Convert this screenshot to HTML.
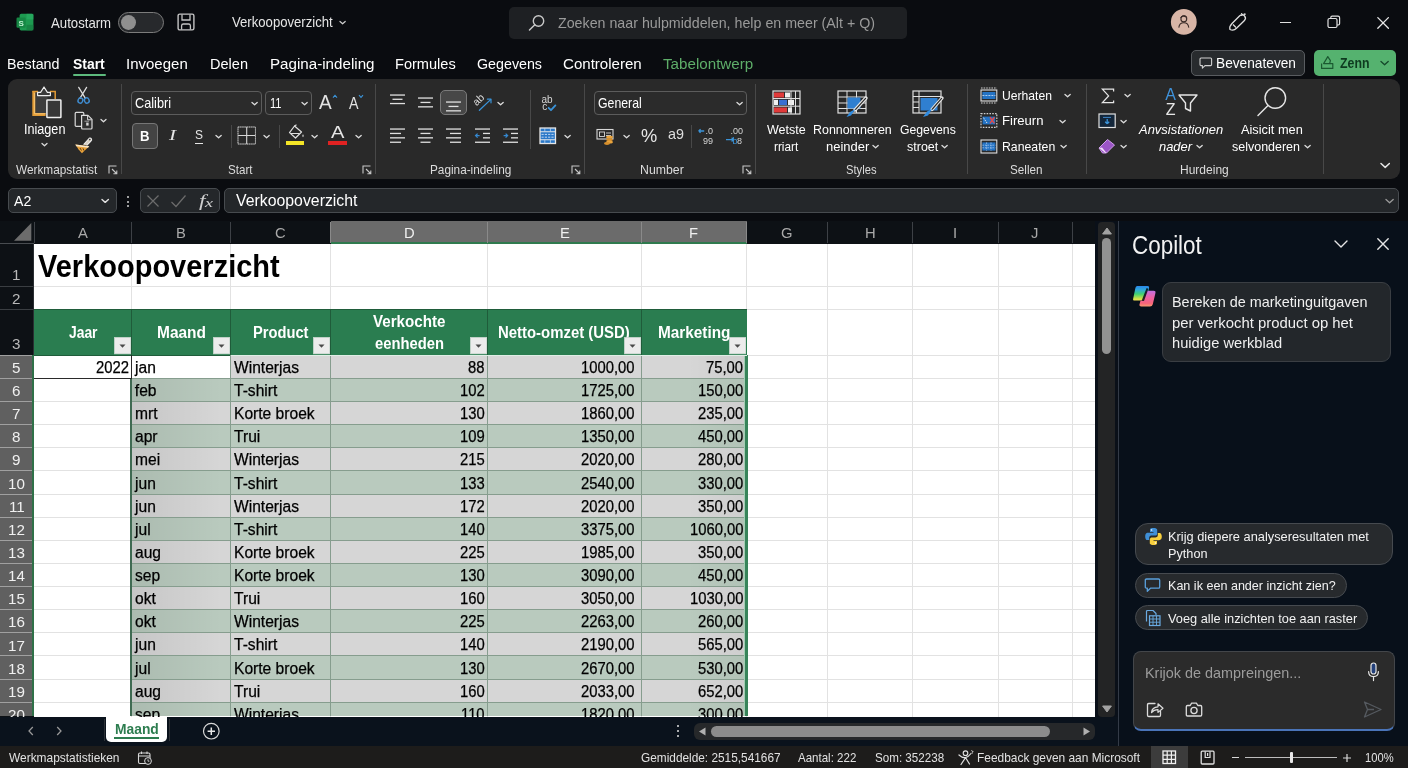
<!DOCTYPE html>
<html lang="nl"><head><meta charset="utf-8"><title>Verkoopoverzicht - Excel</title>
<style>
*{box-sizing:border-box;margin:0;padding:0}
html,body{width:1408px;height:768px;overflow:hidden;background:#0a0c10;font-family:"Liberation Sans",sans-serif;}
body{position:relative;filter:opacity(1)}
.a{position:absolute;display:block}
.t{position:absolute;display:block;white-space:nowrap;transform-origin:0 50%;}

</style></head>
<body>
<svg class="a" style="left:16px;top:13px;" width="18" height="19" viewBox="0 0 18 19" fill="none"><rect x="3.6" y="0.8" width="13.8" height="16.6" rx="1.6" fill="#1d9a50"/>
<rect x="10.5" y="0.8" width="6.9" height="5.6" fill="#2bb365" opacity=".6"/><rect x="10.5" y="11.8" width="6.9" height="5.6" fill="#157a3e" opacity=".7"/>
<rect x="0.5" y="4.6" width="9.2" height="10.2" rx="1.2" fill="#168744"/>
<text x="2.6" y="12.6" font-family="Liberation Sans" font-size="8" font-weight="700" fill="#bdf0d0">S</text></svg>
<span class="t" style="left:50.60px;top:16px;font-size:14.2px;line-height:14.2px;color:#e6e6e6;transform:scaleX(0.9295);">Autostarm</span>
<div class="a" style="left:117.8px;top:11.7px;width:46px;height:21.4px;background:#27292c;border:1.6px solid #7c7c7c;border-radius:10.7px;"></div>
<div class="a" style="left:120.8px;top:15px;width:14.8px;height:14.8px;background:#8f8f8f;border-radius:7.4px;"></div>
<svg class="a" style="left:176.5px;top:13.4px;" width="18" height="18" viewBox="0 0 18 18" fill="none"><rect x="1.1" y="1.1" width="15.8" height="15.8" rx="1.6" stroke="#c4c4c4" stroke-width="1.4"/>
<path d="M5 1.4 V7 H13 V1.4" stroke="#c4c4c4" stroke-width="1.3"/>
<path d="M4.6 16.6 V12.8 Q4.6 11 6.4 11 H11.6 Q13.4 11 13.4 12.8 V16.6" stroke="#c4c4c4" stroke-width="1.3"/></svg>
<span class="t" style="left:231.75px;top:16px;font-size:13.8px;line-height:13.8px;color:#e6e6e6;transform:scaleX(0.9519);">Verkoopoverzicht</span>
<svg class="a" style="left:338.9px;top:20.4px;" width="7.2" height="5.6" viewBox="0 0 7.2 5.6" fill="none"><path d="M1 1.5 L3.6 3.8 L6.2 1.5" stroke="#cfcfcf" stroke-width="1.2" stroke-linecap="round" stroke-linejoin="round"/></svg>
<div class="a" style="left:508.5px;top:7px;width:398.5px;height:31.5px;background:#1e2023;border-radius:5px;"></div>
<svg class="a" style="left:526px;top:12px;" width="22" height="22" viewBox="0 0 22 22" fill="none"><circle cx="12.5" cy="9" r="5.2" stroke="#c9c9c9" stroke-width="1.4"/><path d="M8.8 12.8 L3.5 18" stroke="#c9c9c9" stroke-width="1.5" stroke-linecap="round"/></svg>
<span class="t" style="left:557.50px;top:16px;font-size:14.6px;line-height:14.6px;color:#9a9a9a;transform:scaleX(0.9757);">Zoeken naar hulpmiddelen, help en meer (Alt + Q)</span>
<svg class="a" style="left:1170px;top:8px;" width="28" height="28" viewBox="0 0 28 28" fill="none"><circle cx="13.8" cy="13.9" r="12.9" fill="#d8b5a6"/>
<circle cx="13.8" cy="11" r="2.9" stroke="#3a2b28" stroke-width="1.1"/>
<path d="M10.4 9.6 Q13.8 5.4 17.2 9.6" stroke="#3a2b28" stroke-width="1"/>
<path d="M8.8 19.6 C9.2 16 11.2 14.8 13.8 14.8 C16.4 14.8 18.4 16 18.8 19.6" stroke="#3a2b28" stroke-width="1.1"/></svg>
<svg class="a" style="left:1226px;top:11px;" width="23" height="23" viewBox="0 0 23 23" fill="none"><path d="M4 18.5 C3.2 16 4.5 14 6 12.5 L13.5 5 C15 3.5 17.5 3.6 18.6 5 C19.8 6.4 19.5 8.4 18.2 9.7 L10.5 17.3 C9 18.8 6.5 19.6 4 18.5 Z" stroke="#e0e0e0" stroke-width="1.3" stroke-linejoin="round"/>
<path d="M7 13.5 L10 16.5 M15 4.5 L17.5 3" stroke="#e0e0e0" stroke-width="1.2"/>
<circle cx="18.8" cy="3.2" r="0.9" fill="#e0e0e0"/><circle cx="15.6" cy="2.6" r="0.7" fill="#e0e0e0"/></svg>
<div class="a" style="left:1279.5px;top:21.8px;width:11px;height:1.3px;background:#e0e0e0;"></div>
<svg class="a" style="left:1326px;top:14px;" width="16" height="16" viewBox="0 0 16 16" fill="none"><rect x="2" y="4.5" width="9" height="9" rx="1.5" stroke="#e0e0e0" stroke-width="1.2"/><path d="M4.8 4.5 V3.5 Q4.8 2.2 6.2 2.2 H12 Q13.6 2.2 13.6 3.8 V9.6 Q13.6 11 12.3 11 H11" stroke="#e0e0e0" stroke-width="1.2"/></svg>
<svg class="a" style="left:1376px;top:16px;" width="14" height="14" viewBox="0 0 14 14" fill="none"><path d="M1.8 1.6 L12.4 12.2 M12.4 1.6 L1.8 12.2" stroke="#e6e6e6" stroke-width="1.3" stroke-linecap="round"/></svg>
<span class="t" style="left:7.00px;top:56px;font-size:15.4px;line-height:15.4px;color:#ffffff;transform:scaleX(0.9295);">Bestand</span>
<span class="t" style="left:73.25px;top:56px;font-size:15.4px;line-height:15.4px;color:#ffffff;font-weight:700;transform:scaleX(0.9051);">Start</span>
<span class="t" style="left:126.25px;top:56px;font-size:15.4px;line-height:15.4px;color:#ffffff;transform:scaleX(0.9748);">Invoegen</span>
<span class="t" style="left:209.50px;top:56px;font-size:15.4px;line-height:15.4px;color:#ffffff;transform:scaleX(0.9448);">Delen</span>
<span class="t" style="left:269.50px;top:56px;font-size:15.4px;line-height:15.4px;color:#ffffff;transform:scaleX(0.9848);">Pagina-indeling</span>
<span class="t" style="left:395.00px;top:56px;font-size:15.4px;line-height:15.4px;color:#ffffff;transform:scaleX(0.9471);">Formules</span>
<span class="t" style="left:477.00px;top:56px;font-size:15.4px;line-height:15.4px;color:#ffffff;transform:scaleX(0.9263);">Gegevens</span>
<span class="t" style="left:563.25px;top:56px;font-size:15.4px;line-height:15.4px;color:#ffffff;transform:scaleX(0.9792);">Controleren</span>
<span class="t" style="left:663.25px;top:56px;font-size:15.4px;line-height:15.4px;color:#5eae69;transform:scaleX(0.9858);">Tabelontwerp</span>
<div class="a" style="left:73px;top:73.6px;width:33.3px;height:2px;background:#5dba7d;border-radius:1px;"></div>
<div class="a" style="left:1190.5px;top:50px;width:114px;height:25.5px;background:#282b2e;border:1px solid #595c60;border-radius:5px;"></div>
<svg class="a" style="left:1197.5px;top:54.5px;" width="16" height="16" viewBox="0 0 16 16" fill="none"><path d="M3 3 H12.6 Q13.6 3 13.6 4 V9.6 Q13.6 10.6 12.6 10.6 H7 L4.4 13.2 V10.6 H3 Q2 10.6 2 9.6 V4 Q2 3 3 3 Z" stroke="#d0d0d0" stroke-width="1.1" stroke-linejoin="round"/></svg>
<span class="t" style="left:1216.00px;top:56px;font-size:14.6px;line-height:14.6px;color:#ffffff;transform:scaleX(0.9389);">Bevenateven</span>
<div class="a" style="left:1313.5px;top:50px;width:82px;height:25.5px;background:#55b26f;border-radius:5px;"></div>
<svg class="a" style="left:1319px;top:54px;" width="17" height="17" viewBox="0 0 17 17" fill="none"><path d="M2.6 9.6 V14.4 H13.8 V9.6 H10.6 M8.8 2.6 L4.6 9.6 H10.6 L11.4 6.6 Z" stroke="#1b5a31" stroke-width="1.2" stroke-linejoin="round"/></svg>
<span class="t" style="left:1339.50px;top:56px;font-size:14.6px;line-height:14.6px;color:#0e3a1f;font-weight:700;transform:scaleX(0.8459);">Zenn</span>
<svg class="a" style="left:1380.15px;top:60.2px;" width="9.2" height="6.6" viewBox="0 0 9.2 6.6" fill="none"><path d="M1 1.5 L4.6 4.8 L8.2 1.5" stroke="#14482a" stroke-width="1.3" stroke-linecap="round" stroke-linejoin="round"/></svg>
<div class="a" style="left:8px;top:79px;width:1392px;height:100.3px;background:#292929;border-radius:9px;"></div>
<div class="a" style="left:121.25px;top:83.5px;width:1.2px;height:90px;background:#484848;"></div>
<div class="a" style="left:375.25px;top:83.5px;width:1.2px;height:90px;background:#484848;"></div>
<div class="a" style="left:584.0px;top:83.5px;width:1.2px;height:90px;background:#484848;"></div>
<div class="a" style="left:755.25px;top:83.5px;width:1.2px;height:90px;background:#484848;"></div>
<div class="a" style="left:966.75px;top:83.5px;width:1.2px;height:90px;background:#484848;"></div>
<div class="a" style="left:1085.5px;top:83.5px;width:1.2px;height:90px;background:#484848;"></div>
<div class="a" style="left:1323.0px;top:83.5px;width:1.2px;height:90px;background:#484848;"></div>
<div class="a" style="left:230.75px;top:124.5px;width:1.2px;height:23.0px;background:#484848;"></div>
<div class="a" style="left:278.75px;top:124.5px;width:1.2px;height:23.0px;background:#484848;"></div>
<div class="a" style="left:529.5px;top:89.5px;width:1.2px;height:59.0px;background:#484848;"></div>
<div class="a" style="left:691.0px;top:124.5px;width:1.2px;height:23.0px;background:#484848;"></div>
<span class="t" style="left:16.25px;top:164px;font-size:12.4px;line-height:12.4px;color:#dcdcdc;transform:scaleX(0.9541);">Werkmapstatist</span>
<span class="t" style="left:227.50px;top:164px;font-size:12.4px;line-height:12.4px;color:#dcdcdc;transform:scaleX(0.9361);">Start</span>
<span class="t" style="left:429.50px;top:164px;font-size:12.4px;line-height:12.4px;color:#dcdcdc;transform:scaleX(0.9512);">Pagina-indeling</span>
<span class="t" style="left:639.50px;top:164px;font-size:12.4px;line-height:12.4px;color:#dcdcdc;transform:scaleX(0.9926);">Number</span>
<span class="t" style="left:846.00px;top:164px;font-size:12.4px;line-height:12.4px;color:#dcdcdc;transform:scaleX(0.9037);">Styles</span>
<span class="t" style="left:1010.25px;top:164px;font-size:12.4px;line-height:12.4px;color:#dcdcdc;transform:scaleX(0.9433);">Sellen</span>
<span class="t" style="left:1179.75px;top:164px;font-size:12.4px;line-height:12.4px;color:#dcdcdc;transform:scaleX(0.9692);">Hurdeing</span>
<svg class="a" style="left:108.25px;top:164.5px;" width="10" height="10" viewBox="0 0 10 10" fill="none"><path d="M1 8.5 V1 H8.5" stroke="#c8c8c8" stroke-width="1.1"/><path d="M4 4 L8.5 8.5 M8.8 5.4 V8.8 H5.4" stroke="#c8c8c8" stroke-width="1.1"/></svg>
<svg class="a" style="left:362px;top:164.5px;" width="10" height="10" viewBox="0 0 10 10" fill="none"><path d="M1 8.5 V1 H8.5" stroke="#c8c8c8" stroke-width="1.1"/><path d="M4 4 L8.5 8.5 M8.8 5.4 V8.8 H5.4" stroke="#c8c8c8" stroke-width="1.1"/></svg>
<svg class="a" style="left:571.25px;top:164.5px;" width="10" height="10" viewBox="0 0 10 10" fill="none"><path d="M1 8.5 V1 H8.5" stroke="#c8c8c8" stroke-width="1.1"/><path d="M4 4 L8.5 8.5 M8.8 5.4 V8.8 H5.4" stroke="#c8c8c8" stroke-width="1.1"/></svg>
<svg class="a" style="left:742px;top:164.5px;" width="10" height="10" viewBox="0 0 10 10" fill="none"><path d="M1 8.5 V1 H8.5" stroke="#c8c8c8" stroke-width="1.1"/><path d="M4 4 L8.5 8.5 M8.8 5.4 V8.8 H5.4" stroke="#c8c8c8" stroke-width="1.1"/></svg>
<svg class="a" style="left:1379.55px;top:162.4px;" width="10.4" height="7.2" viewBox="0 0 10.4 7.2" fill="none"><path d="M1 1.5 L5.2 5.4 L9.4 1.5" stroke="#e6e6e6" stroke-width="1.5" stroke-linecap="round" stroke-linejoin="round"/></svg>
<svg class="a" style="left:30px;top:85px;" width="33" height="34" viewBox="0 0 33 34" fill="none"><rect x="4.6" y="7" width="13" height="21.5" fill="#3d3d3d"/>
<path d="M2.4 6.6 H8 M20 6.6 H25.2 V14" stroke="#e29b36" stroke-width="1.5"/>
<path d="M3.8 6 V29.6 H15.6" stroke="#e29b36" stroke-width="3"/>
<path d="M4.4 8 V28.8 H15.6" stroke="#f7c777" stroke-width=".9"/>
<path d="M7.6 10.6 V7.4 H10.6 L14 2 L17.4 7.4 H20.4 V10.6 Z" stroke="#ededed" stroke-width="1.2" fill="#3a3a3a" stroke-linejoin="round"/>
<rect x="16.9" y="14.9" width="14" height="17.6" rx=".6" fill="#383838" stroke="#f0f0f0" stroke-width="1.5"/></svg>
<span class="t" style="left:24.40px;top:123px;font-size:13.8px;line-height:13.8px;color:#ffffff;transform:scaleX(0.9146);">Iniagen</span>
<svg class="a" style="left:41.0px;top:142.25px;" width="7.0" height="5.5" viewBox="0 0 7.0 5.5" fill="none"><path d="M1 1.5 L3.5 3.7 L6.0 1.5" stroke="#dcdcdc" stroke-width="1.3" stroke-linecap="round" stroke-linejoin="round"/></svg>
<svg class="a" style="left:74px;top:85px;" width="20" height="21" viewBox="0 0 20 21" fill="none"><path d="M4.7 2.4 L11.4 13.4 M12.6 2.4 L5.9 13.4" stroke="#dedede" stroke-width="1.25" stroke-linecap="round"/>
<ellipse cx="6.4" cy="15.5" rx="2.3" ry="2.7" transform="rotate(25 6.4 15.5)" stroke="#3f8dd2" stroke-width="1.4"/><ellipse cx="12.8" cy="15.5" rx="2.3" ry="2.7" transform="rotate(-25 12.8 15.5)" stroke="#3f8dd2" stroke-width="1.4"/></svg>
<svg class="a" style="left:74px;top:111px;" width="20" height="20" viewBox="0 0 20 20" fill="none"><rect x="1.2" y="1.4" width="8.6" height="14" rx="1" stroke="#d8d8d8" stroke-width="1.2"/>
<path d="M7.6 4.4 H14 L18 8.4 V17 Q18 18 17 18 H8.6 Q7.6 18 7.6 17 Z" fill="#303030" stroke="#dcdcdc" stroke-width="1.2" stroke-linejoin="round"/>
<path d="M13.6 4.8 V8.8 H17.6" stroke="#dcdcdc" stroke-width="1"/><rect x="12.2" y="11.6" width="2.4" height="3" fill="#d8d8d8"/><path d="M10.5 10.2 H15" stroke="#bdbdbd" stroke-width=".8"/></svg>
<svg class="a" style="left:100.3px;top:118.25px;" width="7.0" height="5.5" viewBox="0 0 7.0 5.5" fill="none"><path d="M1 1.5 L3.5 3.7 L6.0 1.5" stroke="#dcdcdc" stroke-width="1.3" stroke-linecap="round" stroke-linejoin="round"/></svg>
<svg class="a" style="left:74px;top:136px;" width="20" height="19" viewBox="0 0 20 19" fill="none"><path d="M1.4 8.4 L15.2 10.2 L11.6 13.8 L7.9 17.2 L4.6 13.6 Z" fill="#e8a13a"/>
<path d="M1.4 8.4 L15.2 10.2 L14 11.8 L2.2 10.2 Z" fill="#f8e6c8"/>
<path d="M6 12 L7.5 14.5 M9 12.4 L10 14.6" stroke="#3a2a10" stroke-width=".8"/>
<path d="M9.6 8.6 L14.6 3 Q16 1.4 17.2 2.5 Q18.3 3.7 16.9 5.1 L12.8 9.4" stroke="#ececec" stroke-width="1.1" fill="#d8cfc0"/>
<circle cx="15.8" cy="3.6" r=".8" fill="#2b2b2b"/></svg>
<div class="a" style="left:131.25px;top:91px;width:130.5px;height:24px;background:#2b2b2b;border:1px solid #5c5c5c;border-radius:4px;"></div>
<span class="t" style="left:134.70px;top:96px;font-size:14.4px;line-height:14.4px;color:#ffffff;transform:scaleX(0.8836);">Calibri</span>
<svg class="a" style="left:251.4px;top:100.5px;" width="7.2" height="5.6" viewBox="0 0 7.2 5.6" fill="none"><path d="M1 1.5 L3.6 3.8 L6.2 1.5" stroke="#dcdcdc" stroke-width="1.3" stroke-linecap="round" stroke-linejoin="round"/></svg>
<div class="a" style="left:265px;top:91px;width:47px;height:24px;background:#2b2b2b;border:1px solid #5c5c5c;border-radius:4px;"></div>
<span class="t" style="left:269.70px;top:96px;font-size:14.4px;line-height:14.4px;color:#ffffff;transform:scaleX(0.7724);">11</span>
<svg class="a" style="left:301.4px;top:100.5px;" width="7.2" height="5.6" viewBox="0 0 7.2 5.6" fill="none"><path d="M1 1.5 L3.6 3.8 L6.2 1.5" stroke="#dcdcdc" stroke-width="1.3" stroke-linecap="round" stroke-linejoin="round"/></svg>
<span class="t" style="left:319.30px;top:92px;font-size:20px;line-height:20px;color:#e2e2e2;transform:scaleX(0.9518);">A</span>
<svg class="a" style="left:331.6px;top:93.6px;" width="6" height="5" viewBox="0 0 6 5" fill="none"><path d="M1 3.6 L3 1.4 L5 3.6" stroke="#3a93d8" stroke-width="1.1"/></svg>
<span class="t" style="left:349.10px;top:96px;font-size:15.6px;line-height:15.6px;color:#e2e2e2;transform:scaleX(0.9129);">A</span>
<svg class="a" style="left:357.6px;top:94px;" width="6" height="5" viewBox="0 0 6 5" fill="none"><path d="M1 1.2 L3 3.4 L5 1.2" stroke="#3a93d8" stroke-width="1.1"/></svg>
<div class="a" style="left:132px;top:123px;width:26.3px;height:26.3px;background:#444444;border:1px solid #767676;border-radius:4px;"></div>
<span class="t" style="left:140.30px;top:129px;font-size:14.5px;line-height:14.5px;color:#ffffff;font-weight:700;transform:scaleX(0.9061);">B</span>
<span class="t" style="left:168.50px;top:128px;font-size:15px;line-height:15px;color:#e6e6e6;font-style:italic;transform:scaleX(1.4000);font-family:'Liberation Serif',serif;">I</span>
<span class="t" style="left:194.50px;top:128px;font-size:13.5px;line-height:13.5px;color:#e6e6e6;transform:scaleX(0.8873);">S</span>
<div class="a" style="left:194.5px;top:142.6px;width:8.3px;height:1.2px;background:#e6e6e6;"></div>
<svg class="a" style="left:214.65px;top:134.2px;" width="7.2" height="5.6" viewBox="0 0 7.2 5.6" fill="none"><path d="M1 1.5 L3.6 3.8 L6.2 1.5" stroke="#dcdcdc" stroke-width="1.3" stroke-linecap="round" stroke-linejoin="round"/></svg>
<svg class="a" style="left:237px;top:126px;" width="20" height="19" viewBox="0 0 20 19" fill="none"><rect x="1" y="1" width="17.4" height="17" stroke="#a8a8a8" stroke-width="1" stroke-dasharray="1.1 1.1"/>
<path d="M9.7 1 V18 M1 9.5 H18.4" stroke="#d6d6d6" stroke-width="1.1"/><rect x="1" y="1" width="17.4" height="17" stroke="#bdbdbd" stroke-width="0.6"/></svg>
<svg class="a" style="left:263.4px;top:134.2px;" width="7.2" height="5.6" viewBox="0 0 7.2 5.6" fill="none"><path d="M1 1.5 L3.6 3.8 L6.2 1.5" stroke="#dcdcdc" stroke-width="1.3" stroke-linecap="round" stroke-linejoin="round"/></svg>
<svg class="a" style="left:286px;top:124px;" width="20" height="17" viewBox="0 0 20 17" fill="none"><path d="M8.5 2 L15.5 8 L9.5 14 L3.5 8.6 Z" stroke="#e0e0e0" stroke-width="1.2" stroke-linejoin="round"/>
<path d="M8.5 2 L10.5 0.8 M5 9.5 H13.5" stroke="#e0e0e0" stroke-width="1.1"/>
<path d="M17 10 Q18.5 12.3 17 13.2 Q15.5 12.3 17 10 Z" fill="#e0e0e0"/></svg>
<div class="a" style="left:285.75px;top:140.6px;width:18px;height:4.2px;background:#f4e527;"></div>
<svg class="a" style="left:311.4px;top:134.2px;" width="7.2" height="5.6" viewBox="0 0 7.2 5.6" fill="none"><path d="M1 1.5 L3.6 3.8 L6.2 1.5" stroke="#dcdcdc" stroke-width="1.3" stroke-linecap="round" stroke-linejoin="round"/></svg>
<span class="t" style="left:331.20px;top:124px;font-size:17px;line-height:17px;color:#e6e6e6;transform:scaleX(1.1813);">A</span>
<div class="a" style="left:328.3px;top:140.6px;width:19.2px;height:4.4px;background:#e02222;"></div>
<svg class="a" style="left:354.65px;top:134.2px;" width="7.2" height="5.6" viewBox="0 0 7.2 5.6" fill="none"><path d="M1 1.5 L3.6 3.8 L6.2 1.5" stroke="#dcdcdc" stroke-width="1.3" stroke-linecap="round" stroke-linejoin="round"/></svg>
<svg class="a" style="left:389.0px;top:93.65px;" width="17" height="10.9" viewBox="0 0 17 10.9" fill="none"><rect x="1.00" y="0.40" width="15" height="1.3" fill="#e0e0e0"/><rect x="3.50" y="4.65" width="10" height="1.3" fill="#e0e0e0"/><rect x="1.00" y="8.90" width="15" height="1.3" fill="#e0e0e0"/></svg>
<svg class="a" style="left:416.75px;top:96.89999999999999px;" width="17" height="11.200000000000001" viewBox="0 0 17 11.200000000000001" fill="none"><rect x="1.00" y="0.40" width="15" height="1.3" fill="#e0e0e0"/><rect x="3.50" y="4.80" width="10" height="1.3" fill="#e0e0e0"/><rect x="1.00" y="9.20" width="15" height="1.3" fill="#e0e0e0"/></svg>
<div class="a" style="left:440px;top:90.3px;width:27.2px;height:25.2px;background:#474747;border:1px solid #7a7a7a;border-radius:5px;"></div>
<svg class="a" style="left:445.0px;top:100.8px;" width="17" height="11.200000000000001" viewBox="0 0 17 11.200000000000001" fill="none"><rect x="1.00" y="0.40" width="15" height="1.3" fill="#e0e0e0"/><rect x="3.50" y="4.80" width="10" height="1.3" fill="#e0e0e0"/><rect x="1.00" y="9.20" width="15" height="1.3" fill="#e0e0e0"/></svg>
<svg class="a" style="left:470px;top:90px;" width="24" height="24" viewBox="0 0 24 24" fill="none"><text x="0" y="0" font-family="Liberation Sans" font-size="10.5" fill="#dcdcdc" transform="translate(6.4 16.2) rotate(-43)">ab</text>
<path d="M9.4 20.2 L20.6 9.6" stroke="#3a93d8" stroke-width="1.3" stroke-linecap="round"/><path d="M17.4 9.2 L21 9.2 L21 12.8" stroke="#3a93d8" stroke-width="1.2" stroke-linecap="round" stroke-linejoin="round"/></svg>
<svg class="a" style="left:497.15px;top:100.5px;" width="7.2" height="5.6" viewBox="0 0 7.2 5.6" fill="none"><path d="M1 1.5 L3.6 3.8 L6.2 1.5" stroke="#dcdcdc" stroke-width="1.3" stroke-linecap="round" stroke-linejoin="round"/></svg>
<svg class="a" style="left:389.0px;top:128.0px;" width="17" height="15.600000000000001" viewBox="0 0 17 15.600000000000001" fill="none"><rect x="1.00" y="0.40" width="15" height="1.3" fill="#e0e0e0"/><rect x="1.00" y="4.80" width="11" height="1.3" fill="#e0e0e0"/><rect x="1.00" y="9.20" width="15" height="1.3" fill="#e0e0e0"/><rect x="1.00" y="13.60" width="11" height="1.3" fill="#e0e0e0"/></svg>
<svg class="a" style="left:416.75px;top:128.0px;" width="17" height="15.600000000000001" viewBox="0 0 17 15.600000000000001" fill="none"><rect x="1.00" y="0.40" width="15" height="1.3" fill="#e0e0e0"/><rect x="3.50" y="4.80" width="10" height="1.3" fill="#e0e0e0"/><rect x="1.00" y="9.20" width="15" height="1.3" fill="#e0e0e0"/><rect x="3.50" y="13.60" width="10" height="1.3" fill="#e0e0e0"/></svg>
<svg class="a" style="left:444.75px;top:128.0px;" width="17" height="15.600000000000001" viewBox="0 0 17 15.600000000000001" fill="none"><rect x="1.00" y="0.40" width="15" height="1.3" fill="#e0e0e0"/><rect x="5.00" y="4.80" width="11" height="1.3" fill="#e0e0e0"/><rect x="1.00" y="9.20" width="15" height="1.3" fill="#e0e0e0"/><rect x="5.00" y="13.60" width="11" height="1.3" fill="#e0e0e0"/></svg>
<svg class="a" style="left:474.0px;top:128.29999999999998px;" width="17" height="15.5" viewBox="0 0 17 15.5" fill="none"><rect x="1" y="0.40" width="15" height="1.3" fill="#e0e0e0"/><rect x="9" y="4.80" width="7" height="1.3" fill="#e0e0e0"/><rect x="9" y="9.20" width="7" height="1.3" fill="#e0e0e0"/><rect x="1" y="13.60" width="15" height="1.3" fill="#e0e0e0"/><path d="M5.6 7.6 H1.8 M3.6 5.6 L1.6 7.6 L3.6 9.6" stroke="#3588d0" stroke-width="1.3"/></svg>
<svg class="a" style="left:502.25px;top:128.29999999999998px;" width="17" height="15.5" viewBox="0 0 17 15.5" fill="none"><rect x="1" y="0.40" width="15" height="1.3" fill="#e0e0e0"/><rect x="9" y="4.80" width="7" height="1.3" fill="#e0e0e0"/><rect x="9" y="9.20" width="7" height="1.3" fill="#e0e0e0"/><rect x="1" y="13.60" width="15" height="1.3" fill="#e0e0e0"/><path d="M1.6 7.6 H5.4 M3.6 5.6 L5.6 7.6 L3.6 9.6" stroke="#3588d0" stroke-width="1.3"/></svg>
<svg class="a" style="left:539px;top:92px;" width="20" height="22" viewBox="0 0 20 22" fill="none"><text x="2.4" y="10.6" font-family="Liberation Sans" font-size="10" fill="#d6d6d6">ab</text>
<text x="3.2" y="18.4" font-family="Liberation Sans" font-size="10" fill="#d6d6d6">c</text>
<path d="M9.6 15.8 L12 18.2 L16.4 13.4" stroke="#3a93d8" stroke-width="1.8" stroke-linecap="round" stroke-linejoin="round"/></svg>
<svg class="a" style="left:538.5px;top:126.5px;" width="18" height="18" viewBox="0 0 18 18" fill="none"><rect x="1" y="1" width="15.5" height="15.5" fill="#2a78c8" stroke="#e6e6e6" stroke-width="1.3"/>
<path d="M1 4.8 H16.5 M1 12.7 H16.5" stroke="#e6e6e6" stroke-width="1.1"/>
<path d="M2.5 7.4 H15 M2.5 10.2 H15" stroke="#cfe2f8" stroke-width=".9" stroke-dasharray="2.2 1.1"/>
<path d="M5.8 1 V4.8 M11.4 1 V4.8 M5.8 12.7 V16.5 M11.4 12.7 V16.5" stroke="#bcd6f2" stroke-width=".8"/></svg>
<svg class="a" style="left:563.9px;top:134.2px;" width="7.2" height="5.6" viewBox="0 0 7.2 5.6" fill="none"><path d="M1 1.5 L3.6 3.8 L6.2 1.5" stroke="#dcdcdc" stroke-width="1.3" stroke-linecap="round" stroke-linejoin="round"/></svg>
<div class="a" style="left:594px;top:91px;width:152.5px;height:24px;background:#2b2b2b;border:1px solid #5c5c5c;border-radius:4px;"></div>
<span class="t" style="left:597.70px;top:96px;font-size:14.4px;line-height:14.4px;color:#ffffff;transform:scaleX(0.8554);">General</span>
<svg class="a" style="left:736.15px;top:100.5px;" width="7.2" height="5.6" viewBox="0 0 7.2 5.6" fill="none"><path d="M1 1.5 L3.6 3.8 L6.2 1.5" stroke="#dcdcdc" stroke-width="1.3" stroke-linecap="round" stroke-linejoin="round"/></svg>
<svg class="a" style="left:596px;top:127px;" width="21" height="19" viewBox="0 0 21 19" fill="none"><rect x="1" y="2.5" width="16" height="9.5" stroke="#d8d8d8" stroke-width="1.1"/><rect x="3.5" y="5" width="5" height="4.5" stroke="#d8d8d8" stroke-width="0.9"/>
<path d="M10 6 H15 M10 8.5 H15" stroke="#d8d8d8" stroke-width="0.9"/>
<ellipse cx="13.5" cy="10" rx="3.4" ry="1.6" fill="#e8a33d"/><ellipse cx="13.5" cy="12.5" rx="3.4" ry="1.6" fill="#d68f2c"/><ellipse cx="13.5" cy="15" rx="3.4" ry="1.6" fill="#e8a33d"/><ellipse cx="11" cy="16.5" rx="3" ry="1.4" fill="#d68f2c"/></svg>
<svg class="a" style="left:622.9px;top:134.2px;" width="7.2" height="5.6" viewBox="0 0 7.2 5.6" fill="none"><path d="M1 1.5 L3.6 3.8 L6.2 1.5" stroke="#dcdcdc" stroke-width="1.3" stroke-linecap="round" stroke-linejoin="round"/></svg>
<span class="t" style="left:640.75px;top:126px;font-size:19px;line-height:19px;color:#e6e6e6;transform:scaleX(0.9612);">%</span>
<span class="t" style="left:667.80px;top:126px;font-size:15px;line-height:15px;color:#dedede;transform:scaleX(0.9588);">a9</span>
<svg class="a" style="left:696px;top:126px;" width="22" height="20" viewBox="0 0 22 20" fill="none"><text x="9.5" y="8.2" font-family="Liberation Sans" font-size="9" fill="#d4d4d4">.0</text>
<text x="7" y="17.6" font-family="Liberation Sans" font-size="9" fill="#d4d4d4">99</text>
<path d="M2.6 5 H8.2 M2.6 5 L4.6 3.2 M2.6 5 L4.6 6.8" stroke="#3a93d8" stroke-width="1.3"/></svg>
<svg class="a" style="left:724px;top:126px;" width="22" height="20" viewBox="0 0 22 20" fill="none"><text x="6.5" y="8.2" font-family="Liberation Sans" font-size="9" fill="#d4d4d4">.00</text>
<text x="13" y="17.6" font-family="Liberation Sans" font-size="9" fill="#d4d4d4">8</text>
<path d="M2 13.6 H9.6 M9.6 13.6 L7.6 11.8 M9.6 13.6 L7.6 15.4" stroke="#3a93d8" stroke-width="1.3"/><text x="8.6" y="17.6" font-family="Liberation Sans" font-size="9" fill="#3a93d8">b</text></svg>
<svg class="a" style="left:771.5px;top:90px;" width="29" height="25" viewBox="0 0 29 25" fill="none"><rect x="1" y="1" width="27" height="23" stroke="#e0e0e0" stroke-width="1.2"/><rect x="2" y="2.5" width="10" height="5" fill="#e03a3a"/><rect x="13" y="2.5" width="5" height="5" fill="#f0f0f0"/><rect x="7" y="9.8" width="8" height="5.2" fill="#3a6fd0"/><rect x="16" y="9.8" width="6" height="5.2" fill="#f0f0f0"/><rect x="2" y="9.8" width="4" height="5.2" fill="#f0f0f0"/><rect x="2" y="17.5" width="13" height="5" fill="#e03a3a"/><rect x="16" y="17.5" width="4" height="5" fill="#f0f0f0"/><path d="M1 8.5 H28 M1 16.2 H28 M19 1 V24 M23.5 1 V24" stroke="#e0e0e0" stroke-width="1"/></svg>
<span class="t" style="left:766.50px;top:123px;font-size:13.2px;line-height:13.2px;color:#ffffff;transform:scaleX(0.9495);">Wetste</span>
<span class="t" style="left:773.50px;top:140px;font-size:13.2px;line-height:13.2px;color:#ffffff;transform:scaleX(0.8945);">rriart</span>
<svg class="a" style="left:837px;top:90px;" width="33" height="28" viewBox="0 0 33 28" fill="none"><rect x="1" y="1" width="28" height="22" stroke="#e0e0e0" stroke-width="1.2"/><path d="M1 7 H29 M1 13 H29 M1 18.5 H29 M10 1 V23 M19.5 1 V23" stroke="#e0e0e0" stroke-width="1"/><rect x="10.5" y="7.5" width="13" height="11" fill="#2f7fd0"/><path d="M29 8 L18 20" stroke="#e6e6e6" stroke-width="3.4" stroke-linecap="round"/><path d="M28.6 8.4 L18.6 19.4" stroke="#2b2b2b" stroke-width="1.2" stroke-linecap="round"/><path d="M18.5 19 L14 25.5 L9.5 27 L13 22 Z" fill="#2f8be0"/></svg>
<span class="t" style="left:812.75px;top:123px;font-size:13.2px;line-height:13.2px;color:#ffffff;transform:scaleX(0.9422);">Ronnomneren</span>
<span class="t" style="left:825.75px;top:140px;font-size:13.2px;line-height:13.2px;color:#ffffff;transform:scaleX(0.9830);">neinder</span>
<svg class="a" style="left:871.9px;top:144.2px;" width="7.2" height="5.6" viewBox="0 0 7.2 5.6" fill="none"><path d="M1 1.5 L3.6 3.8 L6.2 1.5" stroke="#dcdcdc" stroke-width="1.3" stroke-linecap="round" stroke-linejoin="round"/></svg>
<svg class="a" style="left:911.5px;top:90px;" width="34" height="28" viewBox="0 0 34 28" fill="none"><rect x="1" y="1" width="28" height="22" stroke="#e0e0e0" stroke-width="1.2"/><path d="M1 6.5 H29 M7 1 V23 M1 12 H7 M1 17.5 H7" stroke="#e0e0e0" stroke-width="1"/><rect x="8.5" y="8" width="17" height="12.5" fill="#2f7fd0"/><path d="M30 8 L20 19.5" stroke="#e6e6e6" stroke-width="3.4" stroke-linecap="round"/><path d="M29.6 8.4 L20.4 19" stroke="#2b2b2b" stroke-width="1.2" stroke-linecap="round"/><path d="M20.5 18.5 L16 25.5 L11 27 L15 21.5 Z" fill="#2f8be0"/></svg>
<span class="t" style="left:899.50px;top:123px;font-size:13.2px;line-height:13.2px;color:#ffffff;transform:scaleX(0.9272);">Gegevens</span>
<span class="t" style="left:906.50px;top:140px;font-size:13.2px;line-height:13.2px;color:#ffffff;transform:scaleX(0.9474);">stroet</span>
<svg class="a" style="left:940.6999999999999px;top:144.2px;" width="7.2" height="5.6" viewBox="0 0 7.2 5.6" fill="none"><path d="M1 1.5 L3.6 3.8 L6.2 1.5" stroke="#dcdcdc" stroke-width="1.3" stroke-linecap="round" stroke-linejoin="round"/></svg>
<svg class="a" style="left:980.3px;top:86.6px;" width="18" height="17" viewBox="0 0 18 17" fill="none"><rect x="1" y="3" width="15.8" height="11" stroke="#e0e0e0" stroke-width="1.1"/><rect x="2.4" y="5" width="13" height="7" fill="#2473c4"/><path d="M1 1 H16.8 M1 16 H16.8" stroke="#cfcfcf" stroke-width="1.2" stroke-dasharray="1.6 1"/><path d="M2.4 8.5 H15.4" stroke="#cfe2f8" stroke-width=".8" stroke-dasharray="2 1"/></svg>
<svg class="a" style="left:980.3px;top:112.4px;" width="18" height="17" viewBox="0 0 18 17" fill="none"><rect x="1" y="1.6" width="15.8" height="13.8" stroke="#cfcfcf" stroke-width="1.2" stroke-dasharray="1.6 1.2"/><rect x="2.6" y="4.6" width="12.6" height="7.8" fill="#2473c4"/><path d="M10 5.2 L14.4 11.4 M14.4 5.2 L10 11.4" stroke="#e04a4a" stroke-width="1.5"/><path d="M3.4 5.6 L7 11" stroke="#e6e6e6" stroke-width="1" stroke-dasharray="1.5 1"/></svg>
<svg class="a" style="left:980.3px;top:137.6px;" width="18" height="17" viewBox="0 0 18 17" fill="none"><rect x="1" y="2" width="15.8" height="13" stroke="#e0e0e0" stroke-width="1.1"/><rect x="2.4" y="4.4" width="13" height="8.2" fill="#2473c4"/><path d="M2.4 7.2 H15.4 M2.4 9.8 H15.4 M6.6 4.4 V12.6 M11 4.4 V12.6" stroke="#bcd6f5" stroke-width=".7" stroke-dasharray="1.5 1"/></svg>
<span class="t" style="left:1002.00px;top:89px;font-size:13px;line-height:13px;color:#ffffff;transform:scaleX(0.9349);">Uerhaten</span>
<svg class="a" style="left:1063.65px;top:93.2px;" width="7.2" height="5.6" viewBox="0 0 7.2 5.6" fill="none"><path d="M1 1.5 L3.6 3.8 L6.2 1.5" stroke="#dcdcdc" stroke-width="1.3" stroke-linecap="round" stroke-linejoin="round"/></svg>
<span class="t" style="left:1002.00px;top:114px;font-size:13px;line-height:13px;color:#ffffff;transform:scaleX(1.0076);">Fireurn</span>
<svg class="a" style="left:1059.4px;top:118.7px;" width="7.2" height="5.6" viewBox="0 0 7.2 5.6" fill="none"><path d="M1 1.5 L3.6 3.8 L6.2 1.5" stroke="#dcdcdc" stroke-width="1.3" stroke-linecap="round" stroke-linejoin="round"/></svg>
<span class="t" style="left:1002.00px;top:140px;font-size:13px;line-height:13px;color:#ffffff;transform:scaleX(0.9443);">Raneaten</span>
<svg class="a" style="left:1060.15px;top:144.2px;" width="7.2" height="5.6" viewBox="0 0 7.2 5.6" fill="none"><path d="M1 1.5 L3.6 3.8 L6.2 1.5" stroke="#dcdcdc" stroke-width="1.3" stroke-linecap="round" stroke-linejoin="round"/></svg>
<svg class="a" style="left:1099.5px;top:86.5px;" width="16" height="18" viewBox="0 0 16 18" fill="none"><path d="M13.6 4.4 V2.2 H2.4 L8.6 8.9 L2.4 15.6 H13.6 V13.4" stroke="#e6e6e6" stroke-width="1.25" stroke-linejoin="miter"/></svg>
<svg class="a" style="left:1123.65px;top:93.2px;" width="7.2" height="5.6" viewBox="0 0 7.2 5.6" fill="none"><path d="M1 1.5 L3.6 3.8 L6.2 1.5" stroke="#dcdcdc" stroke-width="1.3" stroke-linecap="round" stroke-linejoin="round"/></svg>
<svg class="a" style="left:1098px;top:113px;" width="19" height="16" viewBox="0 0 19 16" fill="none"><rect x="1" y="1" width="16.2" height="13.5" fill="#13263a" stroke="#e0e0e0" stroke-width="1.2"/><path d="M5 4.4 H13" stroke="#3f86c8" stroke-width="1"/><path d="M9.2 6 V10.6 M9.2 10.8 L7.2 8.8 M9.2 10.8 L11.2 8.8" stroke="#3a93d8" stroke-width="1.3"/></svg>
<svg class="a" style="left:1120.4px;top:118.7px;" width="7.2" height="5.6" viewBox="0 0 7.2 5.6" fill="none"><path d="M1 1.5 L3.6 3.8 L6.2 1.5" stroke="#dcdcdc" stroke-width="1.3" stroke-linecap="round" stroke-linejoin="round"/></svg>
<svg class="a" style="left:1097px;top:137px;" width="20" height="18" viewBox="0 0 20 18" fill="none"><path d="M2 11 L10.5 2.5 L17.5 8 L9.5 16 H5.5 Z"  fill="#9b55c6" stroke="#cfa0ea" stroke-width="1" stroke-linejoin="round"/><path d="M2.3 11 L8 15.8 L9.5 16 L5 10.5 Z" fill="#f0e0fa"/></svg>
<svg class="a" style="left:1120.4px;top:144.2px;" width="7.2" height="5.6" viewBox="0 0 7.2 5.6" fill="none"><path d="M1 1.5 L3.6 3.8 L6.2 1.5" stroke="#dcdcdc" stroke-width="1.3" stroke-linecap="round" stroke-linejoin="round"/></svg>
<svg class="a" style="left:1164px;top:86px;" width="36" height="30" viewBox="0 0 36 30" fill="none"><text x="1.2" y="14.2" font-family="Liberation Sans" font-size="16" fill="#3f93dc">A</text>
<text x="1.8" y="28.6" font-family="Liberation Sans" font-size="16" fill="#e6e6e6">Z</text>
<path d="M15 9 H33 L26.5 17 V25 L21.5 22.5 V17 Z" stroke="#e6e6e6" stroke-width="1.4" stroke-linejoin="round"/></svg>
<span class="t" style="left:1139.25px;top:123px;font-size:13.2px;line-height:13.2px;color:#ffffff;font-style:italic;transform:scaleX(0.9821);">Anvsistationen</span>
<span class="t" style="left:1159.25px;top:140px;font-size:13.2px;line-height:13.2px;color:#ffffff;font-style:italic;transform:scaleX(0.9782);">nader</span>
<svg class="a" style="left:1195.7px;top:144.2px;" width="7.2" height="5.6" viewBox="0 0 7.2 5.6" fill="none"><path d="M1 1.5 L3.6 3.8 L6.2 1.5" stroke="#dcdcdc" stroke-width="1.3" stroke-linecap="round" stroke-linejoin="round"/></svg>
<svg class="a" style="left:1255px;top:85px;" width="34" height="34" viewBox="0 0 34 34" fill="none"><circle cx="20.3" cy="13" r="10.3" stroke="#e6e6e6" stroke-width="1.4"/><path d="M13 20.5 L3 30.5" stroke="#e6e6e6" stroke-width="1.5" stroke-linecap="round"/></svg>
<span class="t" style="left:1240.50px;top:123px;font-size:13.2px;line-height:13.2px;color:#ffffff;transform:scaleX(0.9684);">Aisicit men</span>
<span class="t" style="left:1231.75px;top:140px;font-size:13.2px;line-height:13.2px;color:#ffffff;transform:scaleX(0.9463);">selvonderen</span>
<svg class="a" style="left:1303.7px;top:144.2px;" width="7.2" height="5.6" viewBox="0 0 7.2 5.6" fill="none"><path d="M1 1.5 L3.6 3.8 L6.2 1.5" stroke="#dcdcdc" stroke-width="1.3" stroke-linecap="round" stroke-linejoin="round"/></svg>
<div class="a" style="left:8.3px;top:187.8px;width:109px;height:25.7px;background:#24272a;border:1px solid #474b4f;border-radius:5px;"></div>
<span class="t" style="left:14.00px;top:194px;font-size:14.6px;line-height:14.6px;color:#ffffff;transform:scaleX(0.9659);">A2</span>
<svg class="a" style="left:101.3px;top:198.4px;" width="8.4" height="6.2" viewBox="0 0 8.4 6.2" fill="none"><path d="M1 1.5 L4.2 4.4 L7.4 1.5" stroke="#e0e0e0" stroke-width="1.4" stroke-linecap="round" stroke-linejoin="round"/></svg>
<div class="a" style="left:127.3px;top:196.2px;width:2px;height:2px;background:#d0d0d0;border-radius:1px;"></div>
<div class="a" style="left:127.3px;top:200.8px;width:2px;height:2px;background:#d0d0d0;border-radius:1px;"></div>
<div class="a" style="left:127.3px;top:205.4px;width:2px;height:2px;background:#d0d0d0;border-radius:1px;"></div>
<div class="a" style="left:140px;top:187.8px;width:79.5px;height:25.7px;background:#24272a;border:1px solid #474b4f;border-radius:5px;"></div>
<svg class="a" style="left:146px;top:194px;" width="14" height="14" viewBox="0 0 14 14" fill="none"><path d="M1.5 1.5 L12.5 12.5 M12.5 1.5 L1.5 12.5" stroke="#6c6c6c" stroke-width="1.2"/></svg>
<svg class="a" style="left:170px;top:194px;" width="17" height="14" viewBox="0 0 17 14" fill="none"><path d="M1.5 8 L6 12.5 L15.5 1.5" stroke="#6c6c6c" stroke-width="1.2"/></svg>
<span class="t" style="left:198.50px;top:192px;font-size:17px;line-height:17px;color:#cfcfcf;font-style:italic;transform:scaleX(1.3729);font-family:'Liberation Serif',serif;">f</span>
<span class="t" style="left:204.50px;top:196px;font-size:13px;line-height:13px;color:#cfcfcf;font-style:italic;transform:scaleX(1.3838);font-family:'Liberation Serif',serif;">x</span>
<div class="a" style="left:224.25px;top:187.8px;width:1175px;height:25.7px;background:#24272a;border:1px solid #474b4f;border-radius:5px;"></div>
<span class="t" style="left:236.00px;top:193px;font-size:15.6px;line-height:15.6px;color:#ffffff;transform:scaleX(1.0157);">Verkoopoverzicht</span>
<svg class="a" style="left:1385.15px;top:198.2px;" width="9.2" height="6.6" viewBox="0 0 9.2 6.6" fill="none"><path d="M1 1.5 L4.6 4.8 L8.2 1.5" stroke="#9a9a9a" stroke-width="1.3" stroke-linecap="round" stroke-linejoin="round"/></svg>
<div class="a" style="left:34px;top:243.5px;width:1061px;height:473.0px;background:#ffffff;"></div>
<div class="a" style="left:0px;top:221px;width:1095px;height:22.5px;background:#0d1115;"></div>
<div class="a" style="left:0px;top:243.5px;width:34px;height:473.0px;background:#0d1115;"></div>
<div class="a" style="left:330.5px;top:221px;width:416.29999999999995px;height:22.5px;background:#6b6b6b;"></div>
<div class="a" style="left:330.5px;top:241.6px;width:416.29999999999995px;height:2px;background:#2f7a4e;"></div>
<div class="a" style="left:34px;top:222px;width:1px;height:21px;background:#3d4146;"></div>
<div class="a" style="left:131px;top:222px;width:1px;height:21px;background:#3d4146;"></div>
<div class="a" style="left:230px;top:222px;width:1px;height:21px;background:#3d4146;"></div>
<div class="a" style="left:330px;top:222px;width:1px;height:21px;background:#8a8a8a;"></div>
<div class="a" style="left:487px;top:222px;width:1px;height:21px;background:#8a8a8a;"></div>
<div class="a" style="left:641px;top:222px;width:1px;height:21px;background:#8a8a8a;"></div>
<div class="a" style="left:746px;top:222px;width:1px;height:21px;background:#8a8a8a;"></div>
<div class="a" style="left:827px;top:222px;width:1px;height:21px;background:#3d4146;"></div>
<div class="a" style="left:912px;top:222px;width:1px;height:21px;background:#3d4146;"></div>
<div class="a" style="left:998px;top:222px;width:1px;height:21px;background:#3d4146;"></div>
<div class="a" style="left:1072px;top:222px;width:1px;height:21px;background:#3d4146;"></div>
<svg class="a" style="left:12px;top:221px;" width="22" height="21" viewBox="0 0 22 21" fill="none"><path d="M2 19.8 L19.3 2 V19.8 Z" fill="#6c6c6c"/></svg>
<div class="a" style="left:0px;top:243px;width:34px;height:1px;background:#484c50;"></div>
<span class="t" style="left:78.06px;top:226px;font-size:14.8px;line-height:14.8px;color:#a9a9a9;transform:scaleX(0.9997);">A</span>
<span class="t" style="left:176.06px;top:226px;font-size:14.8px;line-height:14.8px;color:#a9a9a9;transform:scaleX(0.9997);">B</span>
<span class="t" style="left:275.16px;top:226px;font-size:14.8px;line-height:14.8px;color:#a9a9a9;transform:scaleX(1.0001);">C</span>
<span class="t" style="left:403.66px;top:226px;font-size:14.8px;line-height:14.8px;color:#f0f0f0;transform:scaleX(1.0001);">D</span>
<span class="t" style="left:559.56px;top:226px;font-size:14.8px;line-height:14.8px;color:#f0f0f0;transform:scaleX(0.9997);">E</span>
<span class="t" style="left:689.48px;top:226px;font-size:14.8px;line-height:14.8px;color:#f0f0f0;transform:scaleX(0.9993);">F</span>
<span class="t" style="left:781.24px;top:226px;font-size:14.8px;line-height:14.8px;color:#a9a9a9;transform:scaleX(0.9997);">G</span>
<span class="t" style="left:864.66px;top:226px;font-size:14.8px;line-height:14.8px;color:#a9a9a9;transform:scaleX(1.0001);">H</span>
<span class="t" style="left:953.44px;top:226px;font-size:14.8px;line-height:14.8px;color:#a9a9a9;transform:scaleX(0.9968);">I</span>
<span class="t" style="left:1031.30px;top:226px;font-size:14.8px;line-height:14.8px;color:#a9a9a9;transform:scaleX(0.9992);">J</span>
<div class="a" style="left:34px;top:286px;width:1061px;height:1px;background:#e2e2e2;"></div>
<div class="a" style="left:34px;top:309px;width:1061px;height:1px;background:#e2e2e2;"></div>
<div class="a" style="left:34px;top:355px;width:1061px;height:1px;background:#e2e2e2;"></div>
<div class="a" style="left:34px;top:378px;width:1061px;height:1px;background:#e2e2e2;"></div>
<div class="a" style="left:34px;top:401px;width:1061px;height:1px;background:#e2e2e2;"></div>
<div class="a" style="left:34px;top:424px;width:1061px;height:1px;background:#e2e2e2;"></div>
<div class="a" style="left:34px;top:447px;width:1061px;height:1px;background:#e2e2e2;"></div>
<div class="a" style="left:34px;top:470px;width:1061px;height:1px;background:#e2e2e2;"></div>
<div class="a" style="left:34px;top:494px;width:1061px;height:1px;background:#e2e2e2;"></div>
<div class="a" style="left:34px;top:517px;width:1061px;height:1px;background:#e2e2e2;"></div>
<div class="a" style="left:34px;top:540px;width:1061px;height:1px;background:#e2e2e2;"></div>
<div class="a" style="left:34px;top:563px;width:1061px;height:1px;background:#e2e2e2;"></div>
<div class="a" style="left:34px;top:586px;width:1061px;height:1px;background:#e2e2e2;"></div>
<div class="a" style="left:34px;top:609px;width:1061px;height:1px;background:#e2e2e2;"></div>
<div class="a" style="left:34px;top:632px;width:1061px;height:1px;background:#e2e2e2;"></div>
<div class="a" style="left:34px;top:655px;width:1061px;height:1px;background:#e2e2e2;"></div>
<div class="a" style="left:34px;top:679px;width:1061px;height:1px;background:#e2e2e2;"></div>
<div class="a" style="left:34px;top:702px;width:1061px;height:1px;background:#e2e2e2;"></div>
<div class="a" style="left:34px;top:725px;width:1061px;height:1px;background:#e2e2e2;"></div>
<div class="a" style="left:131px;top:243.5px;width:1px;height:473.0px;background:#e2e2e2;"></div>
<div class="a" style="left:230px;top:243.5px;width:1px;height:473.0px;background:#e2e2e2;"></div>
<div class="a" style="left:330px;top:243.5px;width:1px;height:473.0px;background:#e2e2e2;"></div>
<div class="a" style="left:487px;top:243.5px;width:1px;height:473.0px;background:#e2e2e2;"></div>
<div class="a" style="left:641px;top:243.5px;width:1px;height:473.0px;background:#e2e2e2;"></div>
<div class="a" style="left:746px;top:243.5px;width:1px;height:473.0px;background:#e2e2e2;"></div>
<div class="a" style="left:827px;top:243.5px;width:1px;height:473.0px;background:#e2e2e2;"></div>
<div class="a" style="left:912px;top:243.5px;width:1px;height:473.0px;background:#e2e2e2;"></div>
<div class="a" style="left:998px;top:243.5px;width:1px;height:473.0px;background:#e2e2e2;"></div>
<div class="a" style="left:1072px;top:243.5px;width:1px;height:473.0px;background:#e2e2e2;"></div>
<div class="a" style="left:0px;top:285.5px;width:34px;height:1.2px;background:#3a3e42;"></div>
<span class="t" style="left:12.27px;top:267px;font-size:15.2px;line-height:15.2px;color:#b9b9b9;transform:scaleX(1.0001);">1</span>
<div class="a" style="left:0px;top:308.6px;width:34px;height:1.2px;background:#3a3e42;"></div>
<span class="t" style="left:12.27px;top:291px;font-size:15.2px;line-height:15.2px;color:#b9b9b9;transform:scaleX(1.0001);">2</span>
<div class="a" style="left:0px;top:354.5px;width:34px;height:1.2px;background:#3a3e42;"></div>
<span class="t" style="left:12.27px;top:336px;font-size:15.2px;line-height:15.2px;color:#b9b9b9;transform:scaleX(1.0001);">3</span>
<div class="a" style="left:0px;top:355.2px;width:34px;height:23.13499999999999px;background:#606060;"></div>
<div class="a" style="left:0px;top:355px;width:33px;height:1px;background:#a0a0a0;"></div>
<span class="t" style="left:12.27px;top:360px;font-size:15.2px;line-height:15.2px;color:#f0f0f0;transform:scaleX(1.0001);">5</span>
<div class="a" style="left:0px;top:378.335px;width:34px;height:23.13499999999999px;background:#606060;"></div>
<div class="a" style="left:0px;top:378px;width:33px;height:1px;background:#a0a0a0;"></div>
<span class="t" style="left:12.27px;top:383px;font-size:15.2px;line-height:15.2px;color:#f0f0f0;transform:scaleX(1.0001);">6</span>
<div class="a" style="left:0px;top:401.46999999999997px;width:34px;height:23.135000000000048px;background:#606060;"></div>
<div class="a" style="left:0px;top:401px;width:33px;height:1px;background:#a0a0a0;"></div>
<span class="t" style="left:12.27px;top:406px;font-size:15.2px;line-height:15.2px;color:#f0f0f0;transform:scaleX(1.0001);">7</span>
<div class="a" style="left:0px;top:424.605px;width:34px;height:23.13499999999999px;background:#606060;"></div>
<div class="a" style="left:0px;top:424px;width:33px;height:1px;background:#a0a0a0;"></div>
<span class="t" style="left:12.27px;top:429px;font-size:15.2px;line-height:15.2px;color:#f0f0f0;transform:scaleX(1.0001);">8</span>
<div class="a" style="left:0px;top:447.74px;width:34px;height:23.13499999999999px;background:#606060;"></div>
<div class="a" style="left:0px;top:447px;width:33px;height:1px;background:#a0a0a0;"></div>
<span class="t" style="left:12.27px;top:452px;font-size:15.2px;line-height:15.2px;color:#f0f0f0;transform:scaleX(1.0001);">9</span>
<div class="a" style="left:0px;top:470.875px;width:34px;height:23.13499999999999px;background:#606060;"></div>
<div class="a" style="left:0px;top:470px;width:33px;height:1px;background:#a0a0a0;"></div>
<span class="t" style="left:8.05px;top:476px;font-size:15.2px;line-height:15.2px;color:#f0f0f0;transform:scaleX(1.0001);">10</span>
<div class="a" style="left:0px;top:494.01px;width:34px;height:23.13499999999999px;background:#606060;"></div>
<div class="a" style="left:0px;top:494px;width:33px;height:1px;background:#a0a0a0;"></div>
<span class="t" style="left:8.61px;top:499px;font-size:15.2px;line-height:15.2px;color:#f0f0f0;transform:scaleX(1.0009);">11</span>
<div class="a" style="left:0px;top:517.145px;width:34px;height:23.13499999999999px;background:#606060;"></div>
<div class="a" style="left:0px;top:517px;width:33px;height:1px;background:#a0a0a0;"></div>
<span class="t" style="left:8.05px;top:522px;font-size:15.2px;line-height:15.2px;color:#f0f0f0;transform:scaleX(1.0001);">12</span>
<div class="a" style="left:0px;top:540.28px;width:34px;height:23.13499999999999px;background:#606060;"></div>
<div class="a" style="left:0px;top:540px;width:33px;height:1px;background:#a0a0a0;"></div>
<span class="t" style="left:8.05px;top:545px;font-size:15.2px;line-height:15.2px;color:#f0f0f0;transform:scaleX(1.0001);">13</span>
<div class="a" style="left:0px;top:563.415px;width:34px;height:23.13499999999999px;background:#606060;"></div>
<div class="a" style="left:0px;top:563px;width:33px;height:1px;background:#a0a0a0;"></div>
<span class="t" style="left:8.05px;top:568px;font-size:15.2px;line-height:15.2px;color:#f0f0f0;transform:scaleX(1.0001);">14</span>
<div class="a" style="left:0px;top:586.55px;width:34px;height:23.13499999999999px;background:#606060;"></div>
<div class="a" style="left:0px;top:586px;width:33px;height:1px;background:#a0a0a0;"></div>
<span class="t" style="left:8.05px;top:591px;font-size:15.2px;line-height:15.2px;color:#f0f0f0;transform:scaleX(1.0001);">15</span>
<div class="a" style="left:0px;top:609.685px;width:34px;height:23.13499999999999px;background:#606060;"></div>
<div class="a" style="left:0px;top:609px;width:33px;height:1px;background:#a0a0a0;"></div>
<span class="t" style="left:8.05px;top:614px;font-size:15.2px;line-height:15.2px;color:#f0f0f0;transform:scaleX(1.0001);">16</span>
<div class="a" style="left:0px;top:632.8199999999999px;width:34px;height:23.13499999999999px;background:#606060;"></div>
<div class="a" style="left:0px;top:632px;width:33px;height:1px;background:#a0a0a0;"></div>
<span class="t" style="left:8.05px;top:638px;font-size:15.2px;line-height:15.2px;color:#f0f0f0;transform:scaleX(1.0001);">17</span>
<div class="a" style="left:0px;top:655.9549999999999px;width:34px;height:23.135000000000105px;background:#606060;"></div>
<div class="a" style="left:0px;top:655px;width:33px;height:1px;background:#a0a0a0;"></div>
<span class="t" style="left:8.05px;top:661px;font-size:15.2px;line-height:15.2px;color:#f0f0f0;transform:scaleX(1.0001);">18</span>
<div class="a" style="left:0px;top:679.09px;width:34px;height:23.13499999999999px;background:#606060;"></div>
<div class="a" style="left:0px;top:679px;width:33px;height:1px;background:#a0a0a0;"></div>
<span class="t" style="left:8.05px;top:684px;font-size:15.2px;line-height:15.2px;color:#f0f0f0;transform:scaleX(1.0001);">19</span>
<div class="a" style="left:0px;top:702.225px;width:34px;height:14.274999999999977px;background:#606060;"></div>
<div class="a" style="left:0px;top:702px;width:33px;height:1px;background:#a0a0a0;"></div>
<span class="t" style="left:8.05px;top:707px;font-size:15.2px;line-height:15.2px;color:#f0f0f0;transform:scaleX(1.0001);">20</span>
<div class="a" style="left:32.4px;top:355.2px;width:1.8px;height:361.3px;background:#2f7048;"></div>
<div class="a" style="left:33.2px;top:243.5px;width:1px;height:111.69999999999999px;background:#2a2e32;"></div>
<span class="t" style="left:38.30px;top:251px;font-size:30.5px;line-height:30.5px;color:#000;font-weight:700;transform:scaleX(0.9506);">Verkoopoverzicht</span>
<div class="a" style="left:34px;top:309.3px;width:712.8px;height:45.89999999999998px;background:#2a7d50;"></div>
<div class="a" style="left:34px;top:308.6px;width:712.8px;height:1.4px;background:#1f5c3a;"></div>
<div class="a" style="left:34px;top:354.5px;width:712.8px;height:1.4px;background:#1f5c3a;"></div>
<div class="a" style="left:130.9px;top:309.3px;width:1.4px;height:46px;background:#1f5c3a;"></div>
<div class="a" style="left:229.9px;top:309.3px;width:1.4px;height:46px;background:#1f5c3a;"></div>
<div class="a" style="left:329.9px;top:309.3px;width:1.4px;height:46px;background:#1f5c3a;"></div>
<div class="a" style="left:486.9px;top:309.3px;width:1.4px;height:46px;background:#1f5c3a;"></div>
<div class="a" style="left:640.9px;top:309.3px;width:1.4px;height:46px;background:#1f5c3a;"></div>
<span class="t" style="left:68.50px;top:325px;font-size:16px;line-height:16px;color:#fff;font-weight:700;transform:scaleX(0.8657);">Jaar</span>
<span class="t" style="left:156.50px;top:325px;font-size:16px;line-height:16px;color:#fff;font-weight:700;transform:scaleX(0.9670);">Maand</span>
<span class="t" style="left:253.00px;top:325px;font-size:16px;line-height:16px;color:#fff;font-weight:700;transform:scaleX(0.9181);">Product</span>
<span class="t" style="left:498.30px;top:325px;font-size:16px;line-height:16px;color:#fff;font-weight:700;transform:scaleX(0.9319);">Netto-omzet (USD)</span>
<span class="t" style="left:658.00px;top:325px;font-size:16px;line-height:16px;color:#fff;font-weight:700;transform:scaleX(0.9593);">Marketing</span>
<span class="t" style="left:372.50px;top:314px;font-size:16px;line-height:16px;color:#fff;font-weight:700;transform:scaleX(0.9479);">Verkochte</span>
<span class="t" style="left:374.50px;top:336px;font-size:16px;line-height:16px;color:#fff;font-weight:700;transform:scaleX(0.9238);">eenheden</span>
<svg class="a" style="left:113.5px;top:337px;" width="17.5" height="17.5" viewBox="0 0 17.5 17.5" fill="none"><rect x="0.3" y="0.3" width="16.6" height="16.6" fill="#ececec" stroke="#c9d6ce" stroke-width=".6"/><path d="M5.5 7.5 H11.5 L8.5 10.8 Z" fill="#4a4a4a"/></svg>
<svg class="a" style="left:212.5px;top:337px;" width="17.5" height="17.5" viewBox="0 0 17.5 17.5" fill="none"><rect x="0.3" y="0.3" width="16.6" height="16.6" fill="#ececec" stroke="#c9d6ce" stroke-width=".6"/><path d="M5.5 7.5 H11.5 L8.5 10.8 Z" fill="#4a4a4a"/></svg>
<svg class="a" style="left:312.5px;top:337px;" width="17.5" height="17.5" viewBox="0 0 17.5 17.5" fill="none"><rect x="0.3" y="0.3" width="16.6" height="16.6" fill="#ececec" stroke="#c9d6ce" stroke-width=".6"/><path d="M5.5 7.5 H11.5 L8.5 10.8 Z" fill="#4a4a4a"/></svg>
<svg class="a" style="left:469.5px;top:337px;" width="17.5" height="17.5" viewBox="0 0 17.5 17.5" fill="none"><rect x="0.3" y="0.3" width="16.6" height="16.6" fill="#ececec" stroke="#c9d6ce" stroke-width=".6"/><path d="M5.5 7.5 H11.5 L8.5 10.8 Z" fill="#4a4a4a"/></svg>
<svg class="a" style="left:623.5px;top:337px;" width="17.5" height="17.5" viewBox="0 0 17.5 17.5" fill="none"><rect x="0.3" y="0.3" width="16.6" height="16.6" fill="#ececec" stroke="#c9d6ce" stroke-width=".6"/><path d="M5.5 7.5 H11.5 L8.5 10.8 Z" fill="#4a4a4a"/></svg>
<svg class="a" style="left:728.8px;top:337px;" width="17.5" height="17.5" viewBox="0 0 17.5 17.5" fill="none"><rect x="0.3" y="0.3" width="16.6" height="16.6" fill="#ececec" stroke="#c9d6ce" stroke-width=".6"/><path d="M5.5 7.5 H11.5 L8.5 10.8 Z" fill="#4a4a4a"/></svg>
<div class="a" style="left:230.5px;top:355.2px;width:516.3px;height:23.13499999999999px;background:#d6d6d6;"></div>
<div class="a" style="left:131.5px;top:378.335px;width:615.3px;height:23.13499999999999px;background:#b9cabe;"></div>
<div class="a" style="left:131.5px;top:401.46999999999997px;width:615.3px;height:23.13499999999999px;background:#d6d6d6;"></div>
<div class="a" style="left:131.5px;top:424.605px;width:615.3px;height:23.13499999999999px;background:#b9cabe;"></div>
<div class="a" style="left:131.5px;top:447.74px;width:615.3px;height:23.13499999999999px;background:#d6d6d6;"></div>
<div class="a" style="left:131.5px;top:470.875px;width:615.3px;height:23.13499999999999px;background:#b9cabe;"></div>
<div class="a" style="left:131.5px;top:494.01px;width:615.3px;height:23.13499999999999px;background:#d6d6d6;"></div>
<div class="a" style="left:131.5px;top:517.145px;width:615.3px;height:23.13499999999999px;background:#b9cabe;"></div>
<div class="a" style="left:131.5px;top:540.28px;width:615.3px;height:23.13499999999999px;background:#d6d6d6;"></div>
<div class="a" style="left:131.5px;top:563.415px;width:615.3px;height:23.13499999999999px;background:#b9cabe;"></div>
<div class="a" style="left:131.5px;top:586.55px;width:615.3px;height:23.13499999999999px;background:#d6d6d6;"></div>
<div class="a" style="left:131.5px;top:609.685px;width:615.3px;height:23.13499999999999px;background:#b9cabe;"></div>
<div class="a" style="left:131.5px;top:632.8199999999999px;width:615.3px;height:23.13499999999999px;background:#d6d6d6;"></div>
<div class="a" style="left:131.5px;top:655.9549999999999px;width:615.3px;height:23.13499999999999px;background:#b9cabe;"></div>
<div class="a" style="left:131.5px;top:679.09px;width:615.3px;height:23.13499999999999px;background:#d6d6d6;"></div>
<div class="a" style="left:131.5px;top:702.225px;width:615.3px;height:14.274999999999977px;background:#b9cabe;"></div>
<div class="a" style="left:131.5px;top:378.3px;width:90px;height:338.2px;background:linear-gradient(90deg,rgba(0,0,0,.075),rgba(0,0,0,0));"></div>
<div class="a" style="left:686.8px;top:355.2px;width:60px;height:361.3px;background:linear-gradient(90deg,rgba(0,0,0,0),rgba(0,0,0,.04));"></div>
<div class="a" style="left:131.5px;top:378px;width:615.3px;height:1px;background:#869d8e;"></div>
<div class="a" style="left:131.5px;top:401px;width:615.3px;height:1px;background:#869d8e;"></div>
<div class="a" style="left:131.5px;top:424px;width:615.3px;height:1px;background:#869d8e;"></div>
<div class="a" style="left:131.5px;top:447px;width:615.3px;height:1px;background:#869d8e;"></div>
<div class="a" style="left:131.5px;top:470px;width:615.3px;height:1px;background:#869d8e;"></div>
<div class="a" style="left:131.5px;top:494px;width:615.3px;height:1px;background:#869d8e;"></div>
<div class="a" style="left:131.5px;top:517px;width:615.3px;height:1px;background:#869d8e;"></div>
<div class="a" style="left:131.5px;top:540px;width:615.3px;height:1px;background:#869d8e;"></div>
<div class="a" style="left:131.5px;top:563px;width:615.3px;height:1px;background:#869d8e;"></div>
<div class="a" style="left:131.5px;top:586px;width:615.3px;height:1px;background:#869d8e;"></div>
<div class="a" style="left:131.5px;top:609px;width:615.3px;height:1px;background:#869d8e;"></div>
<div class="a" style="left:131.5px;top:632px;width:615.3px;height:1px;background:#869d8e;"></div>
<div class="a" style="left:131.5px;top:655px;width:615.3px;height:1px;background:#869d8e;"></div>
<div class="a" style="left:131.5px;top:679px;width:615.3px;height:1px;background:#869d8e;"></div>
<div class="a" style="left:131.5px;top:702px;width:615.3px;height:1px;background:#869d8e;"></div>
<div class="a" style="left:230px;top:355.2px;width:1px;height:361.3px;background:#869d8e;"></div>
<div class="a" style="left:330px;top:355.2px;width:1px;height:361.3px;background:#869d8e;"></div>
<div class="a" style="left:487px;top:355.2px;width:1px;height:361.3px;background:#869d8e;"></div>
<div class="a" style="left:641px;top:355.2px;width:1px;height:361.3px;background:#869d8e;"></div>
<div class="a" style="left:130px;top:378.3px;width:2.4px;height:338.2px;background:#3f6a52;"></div>
<div class="a" style="left:744.3px;top:355.2px;width:1.2px;height:361.3px;background:#a3cdb4;"></div>
<div class="a" style="left:745.4px;top:355.2px;width:2.3px;height:361.3px;background:#38845a;"></div>
<div class="a" style="left:230.5px;top:355.2px;width:516.3px;height:1.2px;background:#dfeee5;"></div>
<div class="a" style="left:34px;top:355.2px;width:97.5px;height:23.6px;border:1px solid #2a2a2a;border-left:none;border-top:none;"></div>
<div class="a" style="left:131px;top:355.2px;width:1.2px;height:23.6px;background:#2a2a2a;"></div>
<span class="t" style="left:95.53px;top:360px;font-size:15.6px;line-height:15.6px;color:#000;transform:scaleX(0.9501);-webkit-text-stroke:.25px #000;">2022</span>
<span class="t" style="left:134.80px;top:360px;font-size:15.6px;line-height:15.6px;color:#000;transform:scaleX(1.0003);-webkit-text-stroke:.25px #000;">jan</span>
<span class="t" style="left:233.70px;top:360px;font-size:15.6px;line-height:15.6px;color:#000;transform:scaleX(1.0002);-webkit-text-stroke:.25px #000;">Winterjas</span>
<span class="t" style="left:468.12px;top:360px;font-size:15.6px;line-height:15.6px;color:#000;transform:scaleX(0.9496);-webkit-text-stroke:.25px #000;">88</span>
<span class="t" style="left:581.23px;top:360px;font-size:15.6px;line-height:15.6px;color:#000;transform:scaleX(0.9503);-webkit-text-stroke:.25px #000;">1000,00</span>
<span class="t" style="left:706.21px;top:360px;font-size:15.6px;line-height:15.6px;color:#000;transform:scaleX(0.9502);-webkit-text-stroke:.25px #000;">75,00</span>
<span class="t" style="left:134.80px;top:383px;font-size:15.6px;line-height:15.6px;color:#000;transform:scaleX(1.0000);-webkit-text-stroke:.25px #000;">feb</span>
<span class="t" style="left:233.70px;top:383px;font-size:15.6px;line-height:15.6px;color:#000;transform:scaleX(1.0002);-webkit-text-stroke:.25px #000;">T-shirt</span>
<span class="t" style="left:459.87px;top:383px;font-size:15.6px;line-height:15.6px;color:#000;transform:scaleX(0.9499);-webkit-text-stroke:.25px #000;">102</span>
<span class="t" style="left:581.23px;top:383px;font-size:15.6px;line-height:15.6px;color:#000;transform:scaleX(0.9503);-webkit-text-stroke:.25px #000;">1725,00</span>
<span class="t" style="left:697.97px;top:383px;font-size:15.6px;line-height:15.6px;color:#000;transform:scaleX(0.9502);-webkit-text-stroke:.25px #000;">150,00</span>
<span class="t" style="left:134.80px;top:406px;font-size:15.6px;line-height:15.6px;color:#000;transform:scaleX(1.0004);-webkit-text-stroke:.25px #000;">mrt</span>
<span class="t" style="left:233.70px;top:406px;font-size:15.6px;line-height:15.6px;color:#000;transform:scaleX(1.0003);-webkit-text-stroke:.25px #000;">Korte broek</span>
<span class="t" style="left:459.87px;top:406px;font-size:15.6px;line-height:15.6px;color:#000;transform:scaleX(0.9499);-webkit-text-stroke:.25px #000;">130</span>
<span class="t" style="left:581.23px;top:406px;font-size:15.6px;line-height:15.6px;color:#000;transform:scaleX(0.9503);-webkit-text-stroke:.25px #000;">1860,00</span>
<span class="t" style="left:697.97px;top:406px;font-size:15.6px;line-height:15.6px;color:#000;transform:scaleX(0.9502);-webkit-text-stroke:.25px #000;">235,00</span>
<span class="t" style="left:134.80px;top:429px;font-size:15.6px;line-height:15.6px;color:#000;transform:scaleX(1.0001);-webkit-text-stroke:.25px #000;">apr</span>
<span class="t" style="left:233.70px;top:429px;font-size:15.6px;line-height:15.6px;color:#000;transform:scaleX(1.0003);-webkit-text-stroke:.25px #000;">Trui</span>
<span class="t" style="left:459.87px;top:429px;font-size:15.6px;line-height:15.6px;color:#000;transform:scaleX(0.9499);-webkit-text-stroke:.25px #000;">109</span>
<span class="t" style="left:581.23px;top:429px;font-size:15.6px;line-height:15.6px;color:#000;transform:scaleX(0.9503);-webkit-text-stroke:.25px #000;">1350,00</span>
<span class="t" style="left:697.97px;top:429px;font-size:15.6px;line-height:15.6px;color:#000;transform:scaleX(0.9502);-webkit-text-stroke:.25px #000;">450,00</span>
<span class="t" style="left:134.80px;top:452px;font-size:15.6px;line-height:15.6px;color:#000;transform:scaleX(0.9999);-webkit-text-stroke:.25px #000;">mei</span>
<span class="t" style="left:233.70px;top:452px;font-size:15.6px;line-height:15.6px;color:#000;transform:scaleX(1.0002);-webkit-text-stroke:.25px #000;">Winterjas</span>
<span class="t" style="left:459.87px;top:452px;font-size:15.6px;line-height:15.6px;color:#000;transform:scaleX(0.9499);-webkit-text-stroke:.25px #000;">215</span>
<span class="t" style="left:581.23px;top:452px;font-size:15.6px;line-height:15.6px;color:#000;transform:scaleX(0.9503);-webkit-text-stroke:.25px #000;">2020,00</span>
<span class="t" style="left:697.97px;top:452px;font-size:15.6px;line-height:15.6px;color:#000;transform:scaleX(0.9502);-webkit-text-stroke:.25px #000;">280,00</span>
<span class="t" style="left:134.80px;top:476px;font-size:15.6px;line-height:15.6px;color:#000;transform:scaleX(1.0003);-webkit-text-stroke:.25px #000;">jun</span>
<span class="t" style="left:233.70px;top:476px;font-size:15.6px;line-height:15.6px;color:#000;transform:scaleX(1.0002);-webkit-text-stroke:.25px #000;">T-shirt</span>
<span class="t" style="left:459.87px;top:476px;font-size:15.6px;line-height:15.6px;color:#000;transform:scaleX(0.9499);-webkit-text-stroke:.25px #000;">133</span>
<span class="t" style="left:581.23px;top:476px;font-size:15.6px;line-height:15.6px;color:#000;transform:scaleX(0.9503);-webkit-text-stroke:.25px #000;">2540,00</span>
<span class="t" style="left:697.97px;top:476px;font-size:15.6px;line-height:15.6px;color:#000;transform:scaleX(0.9502);-webkit-text-stroke:.25px #000;">330,00</span>
<span class="t" style="left:134.80px;top:499px;font-size:15.6px;line-height:15.6px;color:#000;transform:scaleX(1.0003);-webkit-text-stroke:.25px #000;">jun</span>
<span class="t" style="left:233.70px;top:499px;font-size:15.6px;line-height:15.6px;color:#000;transform:scaleX(1.0002);-webkit-text-stroke:.25px #000;">Winterjas</span>
<span class="t" style="left:459.87px;top:499px;font-size:15.6px;line-height:15.6px;color:#000;transform:scaleX(0.9499);-webkit-text-stroke:.25px #000;">172</span>
<span class="t" style="left:581.23px;top:499px;font-size:15.6px;line-height:15.6px;color:#000;transform:scaleX(0.9503);-webkit-text-stroke:.25px #000;">2020,00</span>
<span class="t" style="left:697.97px;top:499px;font-size:15.6px;line-height:15.6px;color:#000;transform:scaleX(0.9502);-webkit-text-stroke:.25px #000;">350,00</span>
<span class="t" style="left:134.80px;top:522px;font-size:15.6px;line-height:15.6px;color:#000;transform:scaleX(0.9999);-webkit-text-stroke:.25px #000;">jul</span>
<span class="t" style="left:233.70px;top:522px;font-size:15.6px;line-height:15.6px;color:#000;transform:scaleX(1.0002);-webkit-text-stroke:.25px #000;">T-shirt</span>
<span class="t" style="left:459.87px;top:522px;font-size:15.6px;line-height:15.6px;color:#000;transform:scaleX(0.9499);-webkit-text-stroke:.25px #000;">140</span>
<span class="t" style="left:581.23px;top:522px;font-size:15.6px;line-height:15.6px;color:#000;transform:scaleX(0.9503);-webkit-text-stroke:.25px #000;">3375,00</span>
<span class="t" style="left:689.73px;top:522px;font-size:15.6px;line-height:15.6px;color:#000;transform:scaleX(0.9503);-webkit-text-stroke:.25px #000;">1060,00</span>
<span class="t" style="left:134.80px;top:545px;font-size:15.6px;line-height:15.6px;color:#000;transform:scaleX(0.9999);-webkit-text-stroke:.25px #000;">aug</span>
<span class="t" style="left:233.70px;top:545px;font-size:15.6px;line-height:15.6px;color:#000;transform:scaleX(1.0003);-webkit-text-stroke:.25px #000;">Korte broek</span>
<span class="t" style="left:459.87px;top:545px;font-size:15.6px;line-height:15.6px;color:#000;transform:scaleX(0.9499);-webkit-text-stroke:.25px #000;">225</span>
<span class="t" style="left:581.23px;top:545px;font-size:15.6px;line-height:15.6px;color:#000;transform:scaleX(0.9503);-webkit-text-stroke:.25px #000;">1985,00</span>
<span class="t" style="left:697.97px;top:545px;font-size:15.6px;line-height:15.6px;color:#000;transform:scaleX(0.9502);-webkit-text-stroke:.25px #000;">350,00</span>
<span class="t" style="left:134.80px;top:568px;font-size:15.6px;line-height:15.6px;color:#000;transform:scaleX(0.9999);-webkit-text-stroke:.25px #000;">sep</span>
<span class="t" style="left:233.70px;top:568px;font-size:15.6px;line-height:15.6px;color:#000;transform:scaleX(1.0003);-webkit-text-stroke:.25px #000;">Korte broek</span>
<span class="t" style="left:459.87px;top:568px;font-size:15.6px;line-height:15.6px;color:#000;transform:scaleX(0.9499);-webkit-text-stroke:.25px #000;">130</span>
<span class="t" style="left:581.23px;top:568px;font-size:15.6px;line-height:15.6px;color:#000;transform:scaleX(0.9503);-webkit-text-stroke:.25px #000;">3090,00</span>
<span class="t" style="left:697.97px;top:568px;font-size:15.6px;line-height:15.6px;color:#000;transform:scaleX(0.9502);-webkit-text-stroke:.25px #000;">450,00</span>
<span class="t" style="left:134.80px;top:591px;font-size:15.6px;line-height:15.6px;color:#000;transform:scaleX(0.9999);-webkit-text-stroke:.25px #000;">okt</span>
<span class="t" style="left:233.70px;top:591px;font-size:15.6px;line-height:15.6px;color:#000;transform:scaleX(1.0003);-webkit-text-stroke:.25px #000;">Trui</span>
<span class="t" style="left:459.87px;top:591px;font-size:15.6px;line-height:15.6px;color:#000;transform:scaleX(0.9499);-webkit-text-stroke:.25px #000;">160</span>
<span class="t" style="left:581.23px;top:591px;font-size:15.6px;line-height:15.6px;color:#000;transform:scaleX(0.9503);-webkit-text-stroke:.25px #000;">3050,00</span>
<span class="t" style="left:689.73px;top:591px;font-size:15.6px;line-height:15.6px;color:#000;transform:scaleX(0.9503);-webkit-text-stroke:.25px #000;">1030,00</span>
<span class="t" style="left:134.80px;top:614px;font-size:15.6px;line-height:15.6px;color:#000;transform:scaleX(0.9999);-webkit-text-stroke:.25px #000;">okt</span>
<span class="t" style="left:233.70px;top:614px;font-size:15.6px;line-height:15.6px;color:#000;transform:scaleX(1.0002);-webkit-text-stroke:.25px #000;">Winterjas</span>
<span class="t" style="left:459.87px;top:614px;font-size:15.6px;line-height:15.6px;color:#000;transform:scaleX(0.9499);-webkit-text-stroke:.25px #000;">225</span>
<span class="t" style="left:581.23px;top:614px;font-size:15.6px;line-height:15.6px;color:#000;transform:scaleX(0.9503);-webkit-text-stroke:.25px #000;">2263,00</span>
<span class="t" style="left:697.97px;top:614px;font-size:15.6px;line-height:15.6px;color:#000;transform:scaleX(0.9502);-webkit-text-stroke:.25px #000;">260,00</span>
<span class="t" style="left:134.80px;top:637px;font-size:15.6px;line-height:15.6px;color:#000;transform:scaleX(1.0003);-webkit-text-stroke:.25px #000;">jun</span>
<span class="t" style="left:233.70px;top:637px;font-size:15.6px;line-height:15.6px;color:#000;transform:scaleX(1.0002);-webkit-text-stroke:.25px #000;">T-shirt</span>
<span class="t" style="left:459.87px;top:637px;font-size:15.6px;line-height:15.6px;color:#000;transform:scaleX(0.9499);-webkit-text-stroke:.25px #000;">140</span>
<span class="t" style="left:581.23px;top:637px;font-size:15.6px;line-height:15.6px;color:#000;transform:scaleX(0.9503);-webkit-text-stroke:.25px #000;">2190,00</span>
<span class="t" style="left:697.97px;top:637px;font-size:15.6px;line-height:15.6px;color:#000;transform:scaleX(0.9502);-webkit-text-stroke:.25px #000;">565,00</span>
<span class="t" style="left:134.80px;top:661px;font-size:15.6px;line-height:15.6px;color:#000;transform:scaleX(0.9999);-webkit-text-stroke:.25px #000;">jul</span>
<span class="t" style="left:233.70px;top:661px;font-size:15.6px;line-height:15.6px;color:#000;transform:scaleX(1.0003);-webkit-text-stroke:.25px #000;">Korte broek</span>
<span class="t" style="left:459.87px;top:661px;font-size:15.6px;line-height:15.6px;color:#000;transform:scaleX(0.9499);-webkit-text-stroke:.25px #000;">130</span>
<span class="t" style="left:581.23px;top:661px;font-size:15.6px;line-height:15.6px;color:#000;transform:scaleX(0.9503);-webkit-text-stroke:.25px #000;">2670,00</span>
<span class="t" style="left:697.97px;top:661px;font-size:15.6px;line-height:15.6px;color:#000;transform:scaleX(0.9502);-webkit-text-stroke:.25px #000;">530,00</span>
<span class="t" style="left:134.80px;top:684px;font-size:15.6px;line-height:15.6px;color:#000;transform:scaleX(0.9999);-webkit-text-stroke:.25px #000;">aug</span>
<span class="t" style="left:233.70px;top:684px;font-size:15.6px;line-height:15.6px;color:#000;transform:scaleX(1.0003);-webkit-text-stroke:.25px #000;">Trui</span>
<span class="t" style="left:459.87px;top:684px;font-size:15.6px;line-height:15.6px;color:#000;transform:scaleX(0.9499);-webkit-text-stroke:.25px #000;">160</span>
<span class="t" style="left:581.23px;top:684px;font-size:15.6px;line-height:15.6px;color:#000;transform:scaleX(0.9503);-webkit-text-stroke:.25px #000;">2033,00</span>
<span class="t" style="left:697.97px;top:684px;font-size:15.6px;line-height:15.6px;color:#000;transform:scaleX(0.9502);-webkit-text-stroke:.25px #000;">652,00</span>
<span class="t" style="left:134.80px;top:707px;font-size:15.6px;line-height:15.6px;color:#000;transform:scaleX(0.9999);-webkit-text-stroke:.25px #000;">sep</span>
<span class="t" style="left:233.70px;top:707px;font-size:15.6px;line-height:15.6px;color:#000;transform:scaleX(1.0002);-webkit-text-stroke:.25px #000;">Winterjas</span>
<span class="t" style="left:460.97px;top:707px;font-size:15.6px;line-height:15.6px;color:#000;transform:scaleX(0.9498);-webkit-text-stroke:.25px #000;">110</span>
<span class="t" style="left:581.23px;top:707px;font-size:15.6px;line-height:15.6px;color:#000;transform:scaleX(0.9503);-webkit-text-stroke:.25px #000;">1820,00</span>
<span class="t" style="left:697.97px;top:707px;font-size:15.6px;line-height:15.6px;color:#000;transform:scaleX(0.9502);-webkit-text-stroke:.25px #000;">300,00</span>
<div class="a" style="left:0px;top:716.5px;width:1118px;height:29px;background:#0a121c;"></div>
<div class="a" style="left:1095px;top:221px;width:23px;height:495.5px;background:#0a1019;"></div>
<div class="a" style="left:1098px;top:222px;width:17px;height:495px;background:#232425;border-radius:4px;"></div>
<div class="a" style="left:1102px;top:238.3px;width:9.4px;height:116px;background:#929292;border-radius:4.7px;"></div>
<svg class="a" style="left:1100px;top:225.5px;" width="14" height="10" viewBox="0 0 14 10" fill="none"><path d="M2.6 8 L7 2 L11.4 8 Z" fill="#a2a2a2" stroke="#a2a2a2" stroke-width="1" stroke-linejoin="round"/></svg>
<svg class="a" style="left:1100px;top:704px;" width="14" height="10" viewBox="0 0 14 10" fill="none"><path d="M2.6 2 L7 8 L11.4 2 Z" fill="#a2a2a2" stroke="#a2a2a2" stroke-width="1" stroke-linejoin="round"/></svg>
<svg class="a" style="left:25px;top:724.2px;" width="12" height="14" viewBox="0 0 12 14" fill="none"><path d="M7.8 3 L4 7 L7.8 11" stroke="#9a9a9a" stroke-width="1.25"/></svg>
<svg class="a" style="left:53px;top:724.2px;" width="12" height="14" viewBox="0 0 12 14" fill="none"><path d="M4.2 3 L8 7 L4.2 11" stroke="#9a9a9a" stroke-width="1.25"/></svg>
<div class="a" style="left:105.8px;top:716.5px;width:61px;height:25.5px;background:#ffffff;border-radius:0 0 5px 5px;"></div>
<span class="t" style="left:114.50px;top:721px;font-size:15.4px;line-height:15.4px;color:#2d7d4f;font-weight:700;transform:scaleX(0.8985);">Maand</span>
<div class="a" style="left:114px;top:737.3px;width:45px;height:2px;background:#2d7d4f;"></div>
<div class="a" style="left:103.6px;top:719px;width:1px;height:22px;background:#2d3136;"></div>
<div class="a" style="left:169.2px;top:719px;width:1px;height:22px;background:#2d3136;"></div>
<svg class="a" style="left:202px;top:721.5px;" width="19" height="19" viewBox="0 0 19 19" fill="none"><circle cx="9.3" cy="9.2" r="7.8" stroke="#d8d8d8" stroke-width="1.2"/><path d="M9.3 5.5 V12.9 M5.6 9.2 H13" stroke="#e8e8e8" stroke-width="1.5"/></svg>
<div class="a" style="left:676.6px;top:724.6px;width:2.2px;height:2.2px;background:#e0e0e0;border-radius:1.1px;"></div>
<div class="a" style="left:676.6px;top:729.6px;width:2.2px;height:2.2px;background:#e0e0e0;border-radius:1.1px;"></div>
<div class="a" style="left:676.6px;top:734.6px;width:2.2px;height:2.2px;background:#e0e0e0;border-radius:1.1px;"></div>
<div class="a" style="left:693.5px;top:722.5px;width:401.5px;height:17.3px;background:#26282a;border-radius:6px;"></div>
<div class="a" style="left:710.8px;top:725.8px;width:339px;height:11px;background:#8c8c8c;border-radius:5.5px;"></div>
<svg class="a" style="left:697px;top:725.5px;" width="10" height="11" viewBox="0 0 10 11" fill="none"><path d="M8.5 1.5 L2 5.5 L8.5 9.5 Z" fill="#b0b0b0"/></svg>
<svg class="a" style="left:1082px;top:725.5px;" width="10" height="11" viewBox="0 0 10 11" fill="none"><path d="M1.5 1.5 L8 5.5 L1.5 9.5 Z" fill="#b0b0b0"/></svg>
<div class="a" style="left:0px;top:745.7px;width:1408px;height:22.5px;background:#1d1c1b;"></div>
<span class="t" style="left:8.75px;top:752px;font-size:12.6px;line-height:12.6px;color:#e2e2e2;transform:scaleX(0.9472);">Werkmapstatistieken</span>
<svg class="a" style="left:137px;top:749.5px;" width="16" height="16" viewBox="0 0 16 16" fill="none"><rect x="1.5" y="3" width="11.5" height="10.5" rx="1.5" stroke="#d8d8d8" stroke-width="1.1"/><path d="M1.5 6 H13 M4.5 1.5 V4 M10 1.5 V4" stroke="#d8d8d8" stroke-width="1.1"/><circle cx="11" cy="11" r="3.4" fill="#1c1c1c" stroke="#d8d8d8" stroke-width="1"/><path d="M11 9.3 V11.2 H12.4" stroke="#d8d8d8" stroke-width=".9"/></svg>
<span class="t" style="left:640.60px;top:752px;font-size:12.6px;line-height:12.6px;color:#e2e2e2;transform:scaleX(0.9404);">Gemiddelde: 2515,541667</span>
<span class="t" style="left:798.30px;top:752px;font-size:12.6px;line-height:12.6px;color:#e2e2e2;transform:scaleX(0.9147);">Aantal: 222</span>
<span class="t" style="left:875.10px;top:752px;font-size:12.6px;line-height:12.6px;color:#e2e2e2;transform:scaleX(0.9223);">Som: 352238</span>
<svg class="a" style="left:957px;top:749px;" width="18" height="17" viewBox="0 0 18 17" fill="none"><circle cx="8.5" cy="4.2" r="2.3" stroke="#e0e0e0" stroke-width="1.1"/><path d="M2 6 Q8.5 12 14 4.5 M8.3 9 L4 15.5 M8.8 9 L12.5 15" stroke="#e0e0e0" stroke-width="1.2" stroke-linecap="round"/><path d="M14.5 1 L15 2.3 L16.3 2.6 L15.2 3.4 L15.4 4.7" stroke="#e0e0e0" stroke-width=".7"/></svg>
<span class="t" style="left:976.70px;top:752px;font-size:12.6px;line-height:12.6px;color:#e2e2e2;transform:scaleX(0.9465);">Feedback geven aan Microsoft</span>
<div class="a" style="left:1150.5px;top:745.5px;width:37px;height:22.5px;background:#3c3c3c;"></div>
<svg class="a" style="left:1161.5px;top:750px;" width="15" height="15" viewBox="0 0 15 15" fill="none"><rect x="1" y="1" width="12.5" height="12.5" stroke="#f0f0f0" stroke-width="1.3"/><path d="M1 5.2 H13.5 M1 9.4 H13.5 M5.2 1 V13.5 M9.4 1 V13.5" stroke="#f0f0f0" stroke-width="1.2"/></svg>
<svg class="a" style="left:1199.5px;top:749.5px;" width="16" height="16" viewBox="0 0 16 16" fill="none"><rect x="1.2" y="1.2" width="12.8" height="12.8" rx="1" stroke="#e0e0e0" stroke-width="1.3"/><path d="M5.2 1.5 V7.5 H10 V1.5 M7.6 3 V6" stroke="#e0e0e0" stroke-width="1.2"/></svg>
<div class="a" style="left:1231.5px;top:757px;width:7px;height:1.2px;background:#d8d8d8;"></div>
<div class="a" style="left:1244.6px;top:757.1px;width:92.6px;height:1px;background:#bdbdbd;"></div>
<div class="a" style="left:1290.2px;top:751.6px;width:3px;height:11.6px;background:#e8e8e8;border-radius:1px;"></div>
<svg class="a" style="left:1342px;top:752.5px;" width="10" height="10" viewBox="0 0 10 10" fill="none"><path d="M5 1 V9 M1 5 H9" stroke="#d8d8d8" stroke-width="1.2"/></svg>
<span class="t" style="left:1365.00px;top:752px;font-size:12.6px;line-height:12.6px;color:#e2e2e2;transform:scaleX(0.8877);">100%</span>
<div class="a" style="left:1118px;top:221px;width:290px;height:524.5px;background:#08101a;"></div>
<div class="a" style="left:1118.2px;top:221px;width:1.3px;height:524.5px;background:#343b47;"></div>
<span class="t" style="left:1132.40px;top:233px;font-size:25.2px;line-height:25.2px;color:#f2f2f2;transform:scaleX(0.8902);">Copilot</span>
<svg class="a" style="left:1333px;top:238px;" width="16" height="12" viewBox="0 0 16 12" fill="none"><path d="M2 3 L8 9 L14 3" stroke="#e6e6e6" stroke-width="1.4" stroke-linecap="round" stroke-linejoin="round"/></svg>
<svg class="a" style="left:1376px;top:237px;" width="14" height="14" viewBox="0 0 14 14" fill="none"><path d="M1.8 1.8 L12.2 12.2 M12.2 1.8 L1.8 12.2" stroke="#e6e6e6" stroke-width="1.4" stroke-linecap="round"/></svg>
<svg class="a" style="left:1131px;top:284px;" width="27" height="24" viewBox="0 0 27 24" fill="none"><defs><linearGradient id="cga" x1="0" y1="0" x2="0" y2="1"><stop offset="0" stop-color="#2a86ea"/><stop offset=".25" stop-color="#2fa8dc"/><stop offset=".55" stop-color="#3fd070"/><stop offset=".85" stop-color="#c8e04a"/><stop offset="1" stop-color="#f5e050"/></linearGradient>
<linearGradient id="cgb" x1="0" y1="0" x2="0" y2="1"><stop offset="0" stop-color="#c070e0"/><stop offset=".4" stop-color="#ec62a8"/><stop offset=".8" stop-color="#f8647a"/><stop offset="1" stop-color="#f89a70"/></linearGradient></defs>
<path d="M6.2 2 H16.6 Q18.6 2 18.1 4 L15.2 14.6 Q14.6 16.6 12.6 16.6 H3.8 Q1.6 16.6 2.2 14.4 L4.4 4 Q4.8 2 6.2 2 Z" fill="url(#cga)"/>
<path d="M15.2 6.8 H22.6 Q25 6.8 24.4 9.2 L21.8 20.2 Q21.2 22.4 19 22.4 H10.4 Q7.8 22.4 8.6 20 L9.6 16.4 H12.4 L15.2 6.8 Z" fill="url(#cgb)"/>
<path d="M15.6 4 L17.4 4.8 L13 17 L10.6 16.8 Z" fill="#050a12" opacity=".85"/></svg>
<div class="a" style="left:1162px;top:281.7px;width:229px;height:80.5px;background:#23272b;border:1px solid #3a3e43;border-radius:9px;"></div>
<span class="t" style="left:1172.40px;top:295px;font-size:14.4px;line-height:14.4px;color:#f0f0f0;transform:scaleX(1.0020);">Bereken de marketinguitgaven</span>
<span class="t" style="left:1172.40px;top:316px;font-size:14.4px;line-height:14.4px;color:#f0f0f0;transform:scaleX(1.0331);">per verkocht product op het</span>
<span class="t" style="left:1172.40px;top:336px;font-size:14.4px;line-height:14.4px;color:#f0f0f0;transform:scaleX(1.0193);">huidige werkblad</span>
<div class="a" style="left:1134.5px;top:523px;width:258.8px;height:42px;background:#272a2d;border:1px solid #464a4f;border-radius:13px;"></div>
<div class="a" style="left:1134.5px;top:573.2px;width:212.3px;height:24.6px;background:#272a2d;border:1px solid #464a4f;border-radius:12.3px;"></div>
<div class="a" style="left:1134.5px;top:605.3px;width:233.6px;height:25.2px;background:#272a2d;border:1px solid #464a4f;border-radius:12.6px;"></div>
<svg class="a" style="left:1143.5px;top:527px;" width="19" height="19" viewBox="0 0 19 19" fill="none"><path d="M9.3 1 C5.8 1 6 2.5 6 2.5 V5 H9.5 V5.8 H4 C4 5.8 1.2 5.5 1.2 9.4 C1.2 13.3 3.6 13.1 3.6 13.1 H5.2 V11 C5.2 11 5.1 8.6 7.6 8.6 H11 C11 8.6 13.2 8.6 13.2 6.4 V3 C13.2 3 13.6 1 9.3 1 Z" fill="#3f8fd6"/>
<path d="M9.7 18 C13.2 18 13 16.5 13 16.5 V14 H9.5 V13.2 H15 C15 13.2 17.8 13.5 17.8 9.6 C17.8 5.7 15.4 5.9 15.4 5.9 H13.8 V8 C13.8 8 13.9 10.4 11.4 10.4 H8 C8 10.4 5.8 10.4 5.8 12.6 V16 C5.8 16 5.4 18 9.7 18 Z" fill="#f7cf3d"/>
<circle cx="7.6" cy="3" r=".8" fill="#fff"/><circle cx="11.4" cy="16" r=".8" fill="#fff"/></svg>
<span class="t" style="left:1168.30px;top:530px;font-size:13.2px;line-height:13.2px;color:#f2f2f2;transform:scaleX(0.9719);">Krijg diepere analyseresultaten met</span>
<span class="t" style="left:1168.30px;top:547px;font-size:13.2px;line-height:13.2px;color:#f2f2f2;transform:scaleX(0.9619);">Python</span>
<svg class="a" style="left:1144px;top:577px;" width="18" height="17" viewBox="0 0 18 17" fill="none"><path d="M2.5 2 H14.5 Q15.7 2 15.7 3.2 V10 Q15.7 11.2 14.5 11.2 H6.5 L3.3 14.2 V11.2 H2.5 Q1.3 11.2 1.3 10 V3.2 Q1.3 2 2.5 2 Z" stroke="#5aa0dc" stroke-width="1.3" stroke-linejoin="round"/></svg>
<span class="t" style="left:1168.30px;top:579px;font-size:13.2px;line-height:13.2px;color:#f2f2f2;transform:scaleX(0.9531);">Kan ik een ander inzicht zien?</span>
<svg class="a" style="left:1144.5px;top:609px;" width="17" height="18" viewBox="0 0 17 18" fill="none"><path d="M1.5 12.5 V2.5 Q1.5 1.5 2.5 1.5 H8 L11 4.5 V6" stroke="#6aaae0" stroke-width="1.2" stroke-linejoin="round"/>
<rect x="4.5" y="6.8" width="10.5" height="9.7" stroke="#6aaae0" stroke-width="1.2"/><path d="M4.5 10 H15 M4.5 13.2 H15 M8 6.8 V16.5 M11.5 6.8 V16.5" stroke="#6aaae0" stroke-width=".9"/></svg>
<span class="t" style="left:1168.30px;top:612px;font-size:13.2px;line-height:13.2px;color:#f2f2f2;transform:scaleX(0.9702);">Voeg alle inzichten toe aan raster</span>
<div class="a" style="left:1133px;top:651.3px;width:261.5px;height:80.2px;background:#2b2b2b;border:1px solid #43464a;border-radius:8px;border-bottom:2px solid #4a74b8;"></div>
<span class="t" style="left:1145.30px;top:666px;font-size:14.8px;line-height:14.8px;color:#9c9c9c;transform:scaleX(0.9739);">Krijok de dampreingen...</span>
<svg class="a" style="left:1364.5px;top:661px;" width="17" height="23" viewBox="0 0 17 23" fill="none"><rect x="6" y="2" width="5" height="11" rx="2.5" fill="#23407a" stroke="#e6e6e6" stroke-width="1.2"/><path d="M3.6 10.5 Q3.6 15.6 8.5 15.6 Q13.4 15.6 13.4 10.5 M8.5 15.8 V19.6" stroke="#e6e6e6" stroke-width="1.2" stroke-linecap="round"/></svg>
<svg class="a" style="left:1145px;top:700px;" width="20" height="19" viewBox="0 0 20 19" fill="none"><path d="M10 3.5 H3.8 Q2.5 3.5 2.5 4.8 V15.2 Q2.5 16.5 3.8 16.5 H14.2 Q15.5 16.5 15.5 15.2 V11.5" stroke="#dcdcdc" stroke-width="1.3" stroke-linecap="round"/><path d="M6.5 12.5 Q7 7 13 6.8 V3.8 L18 8.2 L13 12.4 V9.6 Q9 9.5 6.5 12.5 Z" stroke="#dcdcdc" stroke-width="1.2" stroke-linejoin="round"/></svg>
<svg class="a" style="left:1183.5px;top:700px;" width="20" height="19" viewBox="0 0 20 19" fill="none"><path d="M3.5 5.5 H6.2 L7.6 3.2 H12.4 L13.8 5.5 H16.5 Q17.7 5.5 17.7 6.7 V14.8 Q17.7 16 16.5 16 H3.5 Q2.3 16 2.3 14.8 V6.7 Q2.3 5.5 3.5 5.5 Z" stroke="#dcdcdc" stroke-width="1.3" stroke-linejoin="round"/><circle cx="10" cy="10.5" r="3.1" stroke="#dcdcdc" stroke-width="1.3"/></svg>
<svg class="a" style="left:1362px;top:699px;" width="21" height="21" viewBox="0 0 21 21" fill="none"><path d="M2.5 3 L19 10.5 L2.5 18 L5.5 10.5 Z M5.5 10.5 H12" stroke="#555a60" stroke-width="1.3" stroke-linejoin="round"/></svg>
</body></html>
